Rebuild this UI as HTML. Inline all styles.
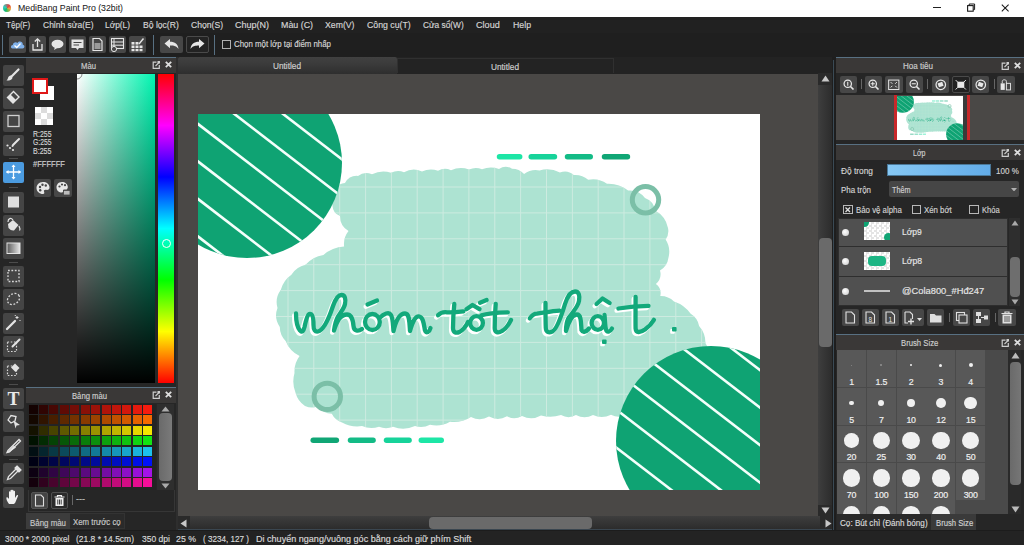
<!DOCTYPE html>
<html><head><meta charset="utf-8"><style>
*{margin:0;padding:0;box-sizing:border-box}
html,body{width:1024px;height:545px;overflow:hidden;background:#1c1c1c;font-family:"Liberation Sans",sans-serif;position:relative}
.a{position:absolute}
.t{position:absolute;white-space:nowrap;color:#d6d6d6;font-size:9.5px;line-height:11px;letter-spacing:-0.3px;-webkit-text-stroke:0.18px currentColor}
.tb{position:absolute;width:17px;height:17px;background:#474747;border-radius:2px}
.ph{position:absolute;height:16px;background:#3a3837;border-top:1px solid #587082}
.ph span{position:absolute;top:2px;white-space:nowrap;color:#cdcdcd;font-size:9.5px;line-height:11px;letter-spacing:-0.2px}
.tl{position:absolute;left:3px;width:20.5px;height:20.5px;background:#454545;border-radius:2px}
.sp{position:absolute;left:9px;width:9px;height:1px;background:#4c4c4c}
svg{position:absolute;overflow:hidden}
</style></head><body>
<div class="a" style="left:0;top:0;width:1024px;height:17px;background:#fff"></div>
<div class="a" style="left:3px;top:4px;width:8px;height:8px;border-radius:50%;background:conic-gradient(from 200deg,#10b070,#30d0c0 90deg,#e04040 200deg,#f0a040 260deg,#20c060 360deg)"></div>
<div class="t" style="left:17.5px;top:2.5px;font-size:9.3px;color:#1a1a1a;letter-spacing:0;transform:scaleX(0.9406);transform-origin:0 0;-webkit-text-stroke:0.05px #1a1a1a">MediBang Paint Pro (32bit)</div>
<div class="a" style="left:933.2px;top:7px;width:7.6px;height:1.2px;background:#222"></div>
<svg style="left:966px;top:3px" width="10" height="9" viewBox="0 0 10 9"><rect x="1.6" y="2.6" width="5.6" height="5.6" fill="none" stroke="#1a1a1a" stroke-width="1.1"/><path d="M3.2,2.4 V1 H8.6 V6.6 H7.4" fill="none" stroke="#1a1a1a" stroke-width="1"/></svg>
<svg style="left:1001px;top:3.5px" width="8.5" height="8" viewBox="0 0 8.5 8"><path d="M0.8,0.6 L7.6,7.4 M7.6,0.6 L0.8,7.4" stroke="#1a1a1a" stroke-width="1.05"/></svg>
<div class="a" style="left:0;top:17px;width:1024px;height:16px;background:#212121"></div>
<div class="a" style="left:0;top:33px;width:1024px;height:1px;background:#333"></div>
<div class="t" style="left:6.2px;top:19.0px;font-size:9.6px;color:#d4d4d4;letter-spacing:0;transform:scaleX(0.8426);transform-origin:0 0;">Tệp(F)</div>
<div class="t" style="left:42.5px;top:19.0px;font-size:9.6px;color:#d4d4d4;letter-spacing:0;transform:scaleX(0.8848);transform-origin:0 0;">Chỉnh sửa(E)</div>
<div class="t" style="left:105.0px;top:19.0px;font-size:9.6px;color:#d4d4d4;letter-spacing:0;transform:scaleX(0.8710);transform-origin:0 0;">Lớp(L)</div>
<div class="t" style="left:142.5px;top:19.0px;font-size:9.6px;color:#d4d4d4;letter-spacing:0;transform:scaleX(0.8941);transform-origin:0 0;">Bộ lọc(R)</div>
<div class="t" style="left:190.5px;top:19.0px;font-size:9.6px;color:#d4d4d4;letter-spacing:0;transform:scaleX(0.8955);transform-origin:0 0;">Chọn(S)</div>
<div class="t" style="left:235.0px;top:19.0px;font-size:9.6px;color:#d4d4d4;letter-spacing:0;transform:scaleX(0.9375);transform-origin:0 0;">Chụp(N)</div>
<div class="t" style="left:281.0px;top:19.0px;font-size:9.6px;color:#d4d4d4;letter-spacing:0;transform:scaleX(0.9234);transform-origin:0 0;">Màu (C)</div>
<div class="t" style="left:324.8px;top:19.0px;font-size:9.6px;color:#d4d4d4;letter-spacing:0;transform:scaleX(0.9073);transform-origin:0 0;">Xem(V)</div>
<div class="t" style="left:366.8px;top:19.0px;font-size:9.6px;color:#d4d4d4;letter-spacing:0;transform:scaleX(0.9118);transform-origin:0 0;">Công cụ(T)</div>
<div class="t" style="left:422.8px;top:19.0px;font-size:9.6px;color:#d4d4d4;letter-spacing:0;transform:scaleX(0.8682);transform-origin:0 0;">Cửa sổ(W)</div>
<div class="t" style="left:476.0px;top:19.0px;font-size:9.6px;color:#d4d4d4;letter-spacing:0;transform:scaleX(0.9470);transform-origin:0 0;">Cloud</div>
<div class="t" style="left:513.0px;top:19.0px;font-size:9.6px;color:#d4d4d4;letter-spacing:0;transform:scaleX(0.9121);transform-origin:0 0;">Help</div>
<div class="a" style="left:0;top:33px;width:1024px;height:24px;background:#1f1f1f"></div>
<div class="a" style="left:2px;top:35px;width:1px;height:20px;background:#587082"></div>
<div class="tb" style="left:9px;top:36px"></div>
<div class="tb" style="left:29px;top:36px"></div>
<div class="tb" style="left:49px;top:36px"></div>
<div class="tb" style="left:69px;top:36px"></div>
<div class="tb" style="left:89px;top:36px"></div>
<div class="tb" style="left:109px;top:36px"></div>
<div class="tb" style="left:129px;top:36px"></div>
<svg style="left:9px;top:36px" width="17" height="17" viewBox="0 0 17 17"><path d="M3.5,12.5 C1.5,12.5 1.5,9 3.8,9 C4,6.5 7,5.5 8.5,7 C10,4.5 14,5.5 13.8,8.8 C16,9 16,12.5 13.5,12.5 Z" fill="#7fb0e8"/><path d="M5.5,9.5 L7.8,11.5 L11.5,7.5" stroke="#fff" stroke-width="1.3" fill="none"/></svg>
<svg style="left:29px;top:36px" width="17" height="17" viewBox="0 0 17 17"><path d="M4,8 L4,14 L13,14 L13,8" stroke="#e6e6e6" stroke-width="1.3" fill="none"/><path d="M8.5,11 L8.5,3 M5.8,5.5 L8.5,2.8 L11.2,5.5" stroke="#e6e6e6" stroke-width="1.3" fill="none"/></svg>
<svg style="left:49px;top:36px" width="17" height="17" viewBox="0 0 17 17"><ellipse cx="8.5" cy="8" rx="6" ry="4.2" fill="#e6e6e6"/><path d="M6,11 L5,14 L9,11.5 Z" fill="#e6e6e6"/></svg>
<svg style="left:69px;top:36px" width="17" height="17" viewBox="0 0 17 17"><path d="M2.5,3.5 H14.5 V12 H10 L8.5,14 L7,12 H2.5 Z" fill="#e6e6e6"/><path d="M4.5,6.5 H12.5 M4.5,9 H10" stroke="#474747" stroke-width="1.2"/></svg>
<svg style="left:89px;top:36px" width="17" height="17" viewBox="0 0 17 17"><path d="M4,2.5 H10.5 L13,5 V14.5 H4 Z" fill="none" stroke="#e6e6e6" stroke-width="1.2"/><rect x="5.5" y="7" width="6" height="6" fill="#9a9a9a"/></svg>
<svg style="left:109px;top:36px" width="17" height="17" viewBox="0 0 17 17"><rect x="2.5" y="2.5" width="12" height="10" fill="none" stroke="#e6e6e6" stroke-width="1.1"/><path d="M2.5,6 H14.5 M2.5,9.2 H14.5 M5,2.5 V12.5" stroke="#e6e6e6" stroke-width="1"/><circle cx="5" cy="13" r="2.6" fill="#474747" stroke="#e6e6e6" stroke-width="1"/></svg>
<svg style="left:129px;top:36px" width="17" height="17" viewBox="0 0 17 17"><g fill="#e6e6e6"><rect x="2.5" y="6" width="3" height="2.6"/><rect x="6.5" y="6" width="3" height="2.6"/><rect x="2.5" y="9.5" width="3" height="2.6"/><rect x="6.5" y="9.5" width="3" height="2.6"/><rect x="10.5" y="9.5" width="3" height="2.6"/><rect x="2.5" y="13" width="3" height="2.2"/><rect x="6.5" y="13" width="3" height="2.2"/><rect x="10.5" y="13" width="3" height="2.2"/></g><path d="M10,8 L14.5,2.5" stroke="#e6e6e6" stroke-width="1.4"/></svg>
<div class="a" style="left:153px;top:35px;width:1px;height:20px;background:#587082"></div>
<div class="a" style="left:160px;top:36px;width:23px;height:17px;background:#474747;border-radius:2px"></div>
<svg style="left:160px;top:36px" width="23" height="17" viewBox="0 0 23 17"><path d="M4.5,7.5 L10,3 V5.8 C15,5.8 18,8 18.5,13 C16.5,10 14,9.5 10,9.5 V12.3 Z" fill="#e6e6e6"/></svg>
<div class="a" style="left:186px;top:36px;width:23px;height:17px;background:#232323;border:1px solid #4a4a4a;border-radius:2px"></div>
<svg style="left:186px;top:36px" width="23" height="17" viewBox="0 0 23 17"><path d="M18.5,7.5 L13,3 V5.8 C8,5.8 5,8 4.5,13 C6.5,10 9,9.5 13,9.5 V12.3 Z" fill="#e6e6e6"/></svg>
<div class="a" style="left:214px;top:35px;width:1px;height:20px;background:#587082"></div>
<div class="a" style="left:222px;top:39.8px;width:8.8px;height:8.8px;border:1px solid #b0b0b0"></div>
<div class="t" style="left:234.0px;top:38.4px;font-size:9.6px;color:#d4d4d4;letter-spacing:0;transform:scaleX(0.8200);transform-origin:0 0;">Chọn một lớp tại điểm nhấp</div>
<div class="a" style="left:0;top:57px;width:26px;height:473px;background:#262626"></div>
<div class="a" style="left:0;top:57px;width:26px;height:1px;background:#587082"></div>
<div class="sp" style="top:158.0px"></div>
<div class="sp" style="top:186.5px"></div>
<div class="sp" style="top:262.0px"></div>
<div class="sp" style="top:384.0px"></div>
<div class="sp" style="top:459.0px"></div>
<div class="tl" style="top:65.0px;background:#454545"></div>
<svg style="left:3px;top:65.0px" width="21" height="20" viewBox="0 0 21 20"><path d="M15.5,4.5 L8.5,11.5" stroke="#e4e4e4" stroke-width="2.2" stroke-linecap="round"/><path d="M8.8,11 C7.5,10 5.5,11 5,13 C4.8,14 4,15 3.5,15.5 C6,15.8 8.5,15 9.5,13 Z" fill="#e4e4e4"/></svg>
<div class="tl" style="top:88.0px;background:#454545"></div>
<svg style="left:3px;top:88.0px" width="21" height="20" viewBox="0 0 21 20"><path d="M10.5,3.5 L16,9 L10,15 L4.5,9.5 Z" fill="none" stroke="#e4e4e4" stroke-width="1.4"/><path d="M4.5,9.5 L7.5,6.5 L13,12 L10,15 Z" fill="#e4e4e4"/></svg>
<div class="tl" style="top:111.0px;background:#454545"></div>
<svg style="left:3px;top:111.0px" width="21" height="20" viewBox="0 0 21 20"><rect x="5" y="4.5" width="11" height="11" fill="none" stroke="#d0d0d0" stroke-width="1.3"/></svg>
<div class="tl" style="top:135.0px;background:#454545"></div>
<svg style="left:3px;top:135.0px" width="21" height="20" viewBox="0 0 21 20"><path d="M16,4 L10,10" stroke="#e4e4e4" stroke-width="2" stroke-linecap="round"/><g fill="#e4e4e4"><circle cx="4.5" cy="10.5" r="1.1"/><circle cx="7" cy="13" r="1.1"/><circle cx="10" cy="15" r="1.1"/><circle cx="9.5" cy="11" r="1"/></g></svg>
<div class="tl" style="top:162.0px;background:#4b9be0"></div>
<svg style="left:3px;top:162.0px" width="21" height="20" viewBox="0 0 21 20"><path d="M10.5,3 V17 M3.5,10 H17.5" stroke="#fff" stroke-width="1.3"/><path d="M10.5,2.5 L8.5,5 H12.5 Z M10.5,17.5 L8.5,15 H12.5 Z M3,10 L5.5,8 V12 Z M18,10 L15.5,8 V12 Z" fill="#fff"/></svg>
<div class="tl" style="top:192.0px;background:#454545"></div>
<svg style="left:3px;top:192.0px" width="21" height="20" viewBox="0 0 21 20"><rect x="5" y="4.5" width="11" height="11" fill="#dedede"/></svg>
<div class="tl" style="top:215.0px;background:#454545"></div>
<svg style="left:3px;top:215.0px" width="21" height="20" viewBox="0 0 21 20"><path d="M5,9 L10,5 L15.5,10 L11,15.5 Q8,16 5.5,13 Z" fill="#e4e4e4"/><path d="M10,5 C8,2.5 5,3 5,7" stroke="#e4e4e4" stroke-width="1.2" fill="none"/><path d="M16,11 Q17.5,14 16.5,15.5" stroke="#e4e4e4" stroke-width="1.3" fill="none"/></svg>
<div class="tl" style="top:238.0px;background:#454545"></div>
<svg style="left:3px;top:238.0px" width="21" height="20" viewBox="0 0 21 20"><defs><linearGradient id="gg" x1="0" x2="1"><stop offset="0" stop-color="#5a5a5a"/><stop offset="1" stop-color="#e8e8e8"/></linearGradient></defs><rect x="4" y="5" width="13" height="10.5" fill="url(#gg)" stroke="#e4e4e4" stroke-width="1"/></svg>
<div class="tl" style="top:266.0px;background:#454545"></div>
<svg style="left:3px;top:266.0px" width="21" height="20" viewBox="0 0 21 20"><rect x="5" y="4.5" width="11" height="11" fill="none" stroke="#d8d8d8" stroke-width="1.3" stroke-dasharray="1.8,1.6"/></svg>
<div class="tl" style="top:289.0px;background:#454545"></div>
<svg style="left:3px;top:289.0px" width="21" height="20" viewBox="0 0 21 20"><ellipse cx="10.5" cy="10" rx="6.5" ry="5" transform="rotate(-35 10.5 10)" fill="none" stroke="#d8d8d8" stroke-width="1.3" stroke-dasharray="1.8,1.6"/></svg>
<div class="tl" style="top:313.0px;background:#454545"></div>
<svg style="left:3px;top:313.0px" width="21" height="20" viewBox="0 0 21 20"><path d="M4,16 L12,8" stroke="#e4e4e4" stroke-width="2.3" stroke-linecap="round"/><path d="M14,3 V6 M12.5,4.5 H15.5 M16.5,7 L17.5,8 M12,2 L12.5,3" stroke="#e4e4e4" stroke-width="1"/></svg>
<div class="tl" style="top:336.0px;background:#454545"></div>
<svg style="left:3px;top:336.0px" width="21" height="20" viewBox="0 0 21 20"><rect x="4.5" y="6" width="9" height="9.5" fill="none" stroke="#d8d8d8" stroke-width="1.2" stroke-dasharray="1.6,1.6"/><path d="M16.5,3.5 L9.5,10.5" stroke="#e4e4e4" stroke-width="2" stroke-linecap="round"/></svg>
<div class="tl" style="top:359.5px;background:#454545"></div>
<svg style="left:3px;top:359.5px" width="21" height="20" viewBox="0 0 21 20"><rect x="4.5" y="6" width="9" height="9.5" fill="none" stroke="#d8d8d8" stroke-width="1.2" stroke-dasharray="1.6,1.6"/><path d="M12,3.5 L16.5,8 L12.5,12 L8,7.5 Z" fill="#e4e4e4"/></svg>
<div class="tl" style="top:388.0px;background:#454545"></div>
<svg style="left:3px;top:388.0px" width="21" height="20" viewBox="0 0 21 20"><text x="10.5" y="17" text-anchor="middle" font-family="Liberation Serif" font-size="18" font-weight="bold" fill="#eaeaea">T</text></svg>
<div class="tl" style="top:411.0px;background:#454545"></div>
<svg style="left:3px;top:411.0px" width="21" height="20" viewBox="0 0 21 20"><path d="M5,9 L8,4.5 L13,5.5 L12,10 L8,12 Z" fill="none" stroke="#e4e4e4" stroke-width="1.3"/><path d="M10.5,9.5 L17,14 L13.5,14.5 L12.5,17.5 Z" fill="#e4e4e4"/></svg>
<div class="tl" style="top:435.5px;background:#454545"></div>
<svg style="left:3px;top:435.5px" width="21" height="20" viewBox="0 0 21 20"><path d="M16,3.5 L5,14.5 L4,16.5 L6.5,16 L17.5,5 Z" fill="none" stroke="#e4e4e4" stroke-width="1.3"/><path d="M4,16.5 L11,9.5 L13,11.5 L6.5,16 Z" fill="#e4e4e4"/></svg>
<div class="tl" style="top:463.0px;background:#454545"></div>
<svg style="left:3px;top:463.0px" width="21" height="20" viewBox="0 0 21 20"><path d="M13,6 L5.5,13.5 L4.5,16.5 L7.5,15.5 L15,8" fill="none" stroke="#e4e4e4" stroke-width="1.3"/><path d="M12,5 L16,9 M14,3 L18,7 L16,9 L12,5 Z" fill="#e4e4e4" stroke="#e4e4e4" stroke-width="1.2"/></svg>
<div class="tl" style="top:487.0px;background:#454545"></div>
<svg style="left:3px;top:487.0px" width="21" height="20" viewBox="0 0 21 20"><path d="M6,17 C4,14 3,12 3.5,10.5 C4,10 5,10.5 6,12 V5 C6,4 7.5,4 7.5,5 V10 V3.5 C7.5,2.5 9,2.5 9,3.5 V10 V3.5 C9,2.5 10.5,2.5 10.5,3.5 V10 V4.5 C10.5,3.5 12,3.5 12,4.5 V11 L13.5,8.5 C14.5,7.5 15.5,8 15,9 L12.5,15 C12,16.5 11,17 10,17 Z" fill="#f0f0f0"/></svg>
<div class="a" style="left:26px;top:57px;width:150px;height:330px;background:#262626"></div>
<div class="ph" style="left:26px;top:57px;width:150px"></div>
<div class="t" style="left:81.0px;top:59.5px;font-size:9.6px;color:#cdcdcd;letter-spacing:0;transform:scaleX(0.8033);transform-origin:0 0;">Màu</div>
<svg style="left:152.0px;top:60.8px" width="8.5" height="8.5" viewBox="0 0 8.5 8.5"><path d="M4.5,1.2 H1.2 V7.3 H7.3 V4" stroke="#cfcfcf" stroke-width="1.2" fill="none"/><path d="M3.5,5 L7.2,1.3" stroke="#cfcfcf" stroke-width="1.1"/><rect x="5.5" y="0" width="2.5" height="2.5" fill="#cfcfcf"/></svg>
<svg style="left:164.6px;top:61.0px" width="7" height="7" viewBox="0 0 7 7"><path d="M0.8,0.8 L6.2,6.2 M6.2,0.8 L0.8,6.2" stroke="#dedede" stroke-width="1.8"/></svg>
<div class="a" style="left:32px;top:78px;width:16px;height:16px;background:#fff;border:2px solid #e01818;z-index:2"></div>
<div class="a" style="left:39px;top:85px;width:16px;height:16px;background:#fff;border:1px solid #262626"></div>
<div class="a" style="left:34.5px;top:106.5px;width:18px;height:18px;background:conic-gradient(#dcdcdc 25%,#fff 0 50%,#dcdcdc 0 75%,#fff 0);background-size:12px 12px"></div>
<div class="t" style="left:32.5px;top:128.5px;font-size:9.0px;color:#d0d0d0;letter-spacing:0;transform:scaleX(0.7698);transform-origin:0 0;">R:255</div>
<div class="t" style="left:32.5px;top:137.2px;font-size:9.0px;color:#d0d0d0;letter-spacing:0;transform:scaleX(0.7541);transform-origin:0 0;">G:255</div>
<div class="t" style="left:32.5px;top:145.5px;font-size:9.0px;color:#d0d0d0;letter-spacing:0;transform:scaleX(0.7862);transform-origin:0 0;">B:255</div>
<div class="t" style="left:32.5px;top:158.0px;font-size:9.5px;color:#d0d0d0;letter-spacing:0;transform:scaleX(0.7978);transform-origin:0 0;">#FFFFFF</div>
<div class="tb" style="left:33.5px;top:179px;width:17.5px;height:17.5px"></div>
<div class="tb" style="left:54.0px;top:179px;width:17.5px;height:17.5px"></div>
<svg style="left:33.5px;top:179px" width="18" height="18" viewBox="0 0 18 18"><path d="M9,3 C4.5,3 2.5,6.5 2.5,9 C2.5,12.5 5.5,15 9,15 C10.5,15 10.5,13.5 10,12.5 C9.5,11.5 10.5,10.5 12,10.8 C14.5,11.2 15.5,10 15.5,8.5 C15.5,5 12.5,3 9,3 Z" fill="#e8e8e8"/><g fill="#474747"><circle cx="6" cy="8" r="1.2"/><circle cx="8.5" cy="5.8" r="1.2"/><circle cx="11.8" cy="6.5" r="1.2"/><circle cx="6.2" cy="11.2" r="1.2"/></g></svg>
<svg style="left:54px;top:179px" width="18" height="18" viewBox="0 0 18 18"><path d="M8,3 C4,3 2.5,6 2.5,8.5 C2.5,11.5 5,13.5 8,13.5 C9,13.5 9.2,12.5 9,11.8 C8.8,11 9.5,10.2 11,10.5 C13,10.8 13.8,9.8 13.8,8 C13.8,5 11,3 8,3 Z" fill="#e8e8e8"/><g fill="#474747"><circle cx="5.5" cy="7.5" r="1.1"/><circle cx="8" cy="5.5" r="1.1"/><circle cx="11" cy="6.2" r="1.1"/></g><rect x="9.5" y="11.5" width="6.5" height="4.5" fill="#bbb" stroke="#474747" stroke-width="0.8"/></svg>
<div class="a" style="left:77px;top:74px;width:78px;height:309px;background:linear-gradient(to bottom,rgba(0,0,0,0),#000),linear-gradient(to right,#fff,#00f5b0)"></div>
<svg style="left:77px;top:74px" width="10" height="10" viewBox="0 0 10 10"><path d="M0,5 A5,5 0 0 0 5,0" stroke="#888" stroke-width="1" fill="none"/></svg>
<div class="a" style="left:158px;top:74px;width:16px;height:309px;background:linear-gradient(to bottom,#f00,#f0f 16.67%,#00f 33.33%,#0ff 50%,#0f0 66.67%,#ff0 83.33%,#f00)"></div>
<div class="a" style="left:161.5px;top:238.5px;width:9px;height:9px;border:1.3px solid #fff;border-radius:50%"></div>
<div class="ph" style="left:26px;top:387px;width:150px"></div>
<div class="t" style="left:71.6px;top:389.5px;font-size:9.6px;color:#cdcdcd;letter-spacing:0;transform:scaleX(0.8003);transform-origin:0 0;">Bảng màu</div>
<svg style="left:152.0px;top:390.8px" width="8.5" height="8.5" viewBox="0 0 8.5 8.5"><path d="M4.5,1.2 H1.2 V7.3 H7.3 V4" stroke="#cfcfcf" stroke-width="1.2" fill="none"/><path d="M3.5,5 L7.2,1.3" stroke="#cfcfcf" stroke-width="1.1"/><rect x="5.5" y="0" width="2.5" height="2.5" fill="#cfcfcf"/></svg>
<svg style="left:164.6px;top:391.0px" width="7" height="7" viewBox="0 0 7 7"><path d="M0.8,0.8 L6.2,6.2 M6.2,0.8 L0.8,6.2" stroke="#dedede" stroke-width="1.8"/></svg>
<div class="a" style="left:26px;top:403px;width:150px;height:127px;background:#262626"></div>
<div class="a" style="left:27px;top:404px;width:129px;height:86px;background:#242424"></div>
<div class="a" style="left:28.6px;top:405.0px;width:9px;height:9px;background:rgb(20,2,1)"></div><div class="a" style="left:39.0px;top:405.0px;width:9px;height:9px;background:rgb(48,5,3)"></div><div class="a" style="left:49.4px;top:405.0px;width:9px;height:9px;background:rgb(72,8,4)"></div><div class="a" style="left:59.9px;top:405.0px;width:9px;height:9px;background:rgb(95,11,5)"></div><div class="a" style="left:70.3px;top:405.0px;width:9px;height:9px;background:rgb(116,13,7)"></div><div class="a" style="left:80.7px;top:405.0px;width:9px;height:9px;background:rgb(136,16,8)"></div><div class="a" style="left:91.1px;top:405.0px;width:9px;height:9px;background:rgb(156,18,9)"></div><div class="a" style="left:101.5px;top:405.0px;width:9px;height:9px;background:rgb(175,20,10)"></div><div class="a" style="left:112.0px;top:405.0px;width:9px;height:9px;background:rgb(193,22,12)"></div><div class="a" style="left:122.4px;top:405.0px;width:9px;height:9px;background:rgb(211,24,13)"></div><div class="a" style="left:132.8px;top:405.0px;width:9px;height:9px;background:rgb(229,26,14)"></div><div class="a" style="left:143.2px;top:405.0px;width:9px;height:9px;background:rgb(246,28,15)"></div><div class="a" style="left:28.6px;top:415.4px;width:9px;height:9px;background:rgb(20,8,0)"></div><div class="a" style="left:39.0px;top:415.4px;width:9px;height:9px;background:rgb(48,20,0)"></div><div class="a" style="left:49.4px;top:415.4px;width:9px;height:9px;background:rgb(72,31,0)"></div><div class="a" style="left:59.9px;top:415.4px;width:9px;height:9px;background:rgb(95,41,0)"></div><div class="a" style="left:70.3px;top:415.4px;width:9px;height:9px;background:rgb(116,50,0)"></div><div class="a" style="left:80.7px;top:415.4px;width:9px;height:9px;background:rgb(136,58,0)"></div><div class="a" style="left:91.1px;top:415.4px;width:9px;height:9px;background:rgb(156,67,0)"></div><div class="a" style="left:101.5px;top:415.4px;width:9px;height:9px;background:rgb(175,75,0)"></div><div class="a" style="left:112.0px;top:415.4px;width:9px;height:9px;background:rgb(193,83,0)"></div><div class="a" style="left:122.4px;top:415.4px;width:9px;height:9px;background:rgb(211,91,0)"></div><div class="a" style="left:132.8px;top:415.4px;width:9px;height:9px;background:rgb(229,98,0)"></div><div class="a" style="left:143.2px;top:415.4px;width:9px;height:9px;background:rgb(246,106,0)"></div><div class="a" style="left:28.6px;top:425.8px;width:9px;height:9px;background:rgb(20,18,0)"></div><div class="a" style="left:39.0px;top:425.8px;width:9px;height:9px;background:rgb(48,45,0)"></div><div class="a" style="left:49.4px;top:425.8px;width:9px;height:9px;background:rgb(72,68,0)"></div><div class="a" style="left:59.9px;top:425.8px;width:9px;height:9px;background:rgb(95,89,0)"></div><div class="a" style="left:70.3px;top:425.8px;width:9px;height:9px;background:rgb(116,109,0)"></div><div class="a" style="left:80.7px;top:425.8px;width:9px;height:9px;background:rgb(136,128,0)"></div><div class="a" style="left:91.1px;top:425.8px;width:9px;height:9px;background:rgb(156,146,0)"></div><div class="a" style="left:101.5px;top:425.8px;width:9px;height:9px;background:rgb(175,164,0)"></div><div class="a" style="left:112.0px;top:425.8px;width:9px;height:9px;background:rgb(193,182,0)"></div><div class="a" style="left:122.4px;top:425.8px;width:9px;height:9px;background:rgb(211,199,0)"></div><div class="a" style="left:132.8px;top:425.8px;width:9px;height:9px;background:rgb(229,215,0)"></div><div class="a" style="left:143.2px;top:425.8px;width:9px;height:9px;background:rgb(246,231,0)"></div><div class="a" style="left:28.6px;top:436.3px;width:9px;height:9px;background:rgb(1,18,1)"></div><div class="a" style="left:39.0px;top:436.3px;width:9px;height:9px;background:rgb(3,44,3)"></div><div class="a" style="left:49.4px;top:436.3px;width:9px;height:9px;background:rgb(5,67,5)"></div><div class="a" style="left:59.9px;top:436.3px;width:9px;height:9px;background:rgb(7,87,7)"></div><div class="a" style="left:70.3px;top:436.3px;width:9px;height:9px;background:rgb(9,107,9)"></div><div class="a" style="left:80.7px;top:436.3px;width:9px;height:9px;background:rgb(10,125,10)"></div><div class="a" style="left:91.1px;top:436.3px;width:9px;height:9px;background:rgb(12,143,12)"></div><div class="a" style="left:101.5px;top:436.3px;width:9px;height:9px;background:rgb(13,161,13)"></div><div class="a" style="left:112.0px;top:436.3px;width:9px;height:9px;background:rgb(15,178,15)"></div><div class="a" style="left:122.4px;top:436.3px;width:9px;height:9px;background:rgb(16,194,16)"></div><div class="a" style="left:132.8px;top:436.3px;width:9px;height:9px;background:rgb(17,211,17)"></div><div class="a" style="left:143.2px;top:436.3px;width:9px;height:9px;background:rgb(19,227,19)"></div><div class="a" style="left:28.6px;top:446.7px;width:9px;height:9px;background:rgb(2,15,19)"></div><div class="a" style="left:39.0px;top:446.7px;width:9px;height:9px;background:rgb(5,37,46)"></div><div class="a" style="left:49.4px;top:446.7px;width:9px;height:9px;background:rgb(8,57,69)"></div><div class="a" style="left:59.9px;top:446.7px;width:9px;height:9px;background:rgb(11,74,91)"></div><div class="a" style="left:70.3px;top:446.7px;width:9px;height:9px;background:rgb(13,91,111)"></div><div class="a" style="left:80.7px;top:446.7px;width:9px;height:9px;background:rgb(16,107,131)"></div><div class="a" style="left:91.1px;top:446.7px;width:9px;height:9px;background:rgb(18,122,150)"></div><div class="a" style="left:101.5px;top:446.7px;width:9px;height:9px;background:rgb(20,137,168)"></div><div class="a" style="left:112.0px;top:446.7px;width:9px;height:9px;background:rgb(22,151,185)"></div><div class="a" style="left:122.4px;top:446.7px;width:9px;height:9px;background:rgb(24,165,203)"></div><div class="a" style="left:132.8px;top:446.7px;width:9px;height:9px;background:rgb(26,179,220)"></div><div class="a" style="left:143.2px;top:446.7px;width:9px;height:9px;background:rgb(28,193,236)"></div><div class="a" style="left:28.6px;top:457.1px;width:9px;height:9px;background:rgb(0,1,20)"></div><div class="a" style="left:39.0px;top:457.1px;width:9px;height:9px;background:rgb(0,3,48)"></div><div class="a" style="left:49.4px;top:457.1px;width:9px;height:9px;background:rgb(0,5,72)"></div><div class="a" style="left:59.9px;top:457.1px;width:9px;height:9px;background:rgb(0,7,95)"></div><div class="a" style="left:70.3px;top:457.1px;width:9px;height:9px;background:rgb(0,9,116)"></div><div class="a" style="left:80.7px;top:457.1px;width:9px;height:9px;background:rgb(0,10,136)"></div><div class="a" style="left:91.1px;top:457.1px;width:9px;height:9px;background:rgb(0,12,156)"></div><div class="a" style="left:101.5px;top:457.1px;width:9px;height:9px;background:rgb(0,13,175)"></div><div class="a" style="left:112.0px;top:457.1px;width:9px;height:9px;background:rgb(0,15,193)"></div><div class="a" style="left:122.4px;top:457.1px;width:9px;height:9px;background:rgb(0,16,211)"></div><div class="a" style="left:132.8px;top:457.1px;width:9px;height:9px;background:rgb(0,17,229)"></div><div class="a" style="left:143.2px;top:457.1px;width:9px;height:9px;background:rgb(0,19,246)"></div><div class="a" style="left:28.6px;top:467.5px;width:9px;height:9px;background:rgb(13,1,18)"></div><div class="a" style="left:39.0px;top:467.5px;width:9px;height:9px;background:rgb(32,3,45)"></div><div class="a" style="left:49.4px;top:467.5px;width:9px;height:9px;background:rgb(48,5,68)"></div><div class="a" style="left:59.9px;top:467.5px;width:9px;height:9px;background:rgb(63,7,89)"></div><div class="a" style="left:70.3px;top:467.5px;width:9px;height:9px;background:rgb(77,9,109)"></div><div class="a" style="left:80.7px;top:467.5px;width:9px;height:9px;background:rgb(91,10,128)"></div><div class="a" style="left:91.1px;top:467.5px;width:9px;height:9px;background:rgb(104,12,146)"></div><div class="a" style="left:101.5px;top:467.5px;width:9px;height:9px;background:rgb(116,13,164)"></div><div class="a" style="left:112.0px;top:467.5px;width:9px;height:9px;background:rgb(129,15,182)"></div><div class="a" style="left:122.4px;top:467.5px;width:9px;height:9px;background:rgb(141,16,199)"></div><div class="a" style="left:132.8px;top:467.5px;width:9px;height:9px;background:rgb(152,17,215)"></div><div class="a" style="left:143.2px;top:467.5px;width:9px;height:9px;background:rgb(164,19,231)"></div><div class="a" style="left:28.6px;top:477.9px;width:9px;height:9px;background:rgb(20,1,12)"></div><div class="a" style="left:39.0px;top:477.9px;width:9px;height:9px;background:rgb(48,2,30)"></div><div class="a" style="left:49.4px;top:477.9px;width:9px;height:9px;background:rgb(72,4,45)"></div><div class="a" style="left:59.9px;top:477.9px;width:9px;height:9px;background:rgb(95,5,59)"></div><div class="a" style="left:70.3px;top:477.9px;width:9px;height:9px;background:rgb(116,6,73)"></div><div class="a" style="left:80.7px;top:477.9px;width:9px;height:9px;background:rgb(136,8,85)"></div><div class="a" style="left:91.1px;top:477.9px;width:9px;height:9px;background:rgb(156,9,97)"></div><div class="a" style="left:101.5px;top:477.9px;width:9px;height:9px;background:rgb(175,10,109)"></div><div class="a" style="left:112.0px;top:477.9px;width:9px;height:9px;background:rgb(193,11,121)"></div><div class="a" style="left:122.4px;top:477.9px;width:9px;height:9px;background:rgb(211,12,132)"></div><div class="a" style="left:132.8px;top:477.9px;width:9px;height:9px;background:rgb(229,13,143)"></div><div class="a" style="left:143.2px;top:477.9px;width:9px;height:9px;background:rgb(246,14,154)"></div>
<div class="a" style="left:157px;top:404px;width:17px;height:86px;background:#2e2e2e"></div>
<div class="a" style="left:159px;top:413px;width:13px;height:68px;background:linear-gradient(to right,#6a6a6a,#7a7a7a);border-radius:4px"></div>
<svg style="left:161px;top:406px" width="9" height="6" viewBox="0 0 9 6"><path d="M4.5,0.5 L8.5,5.5 H0.5 Z" fill="#aaa"/></svg>
<svg style="left:161px;top:483px" width="9" height="6" viewBox="0 0 9 6"><path d="M4.5,5.5 L8.5,0.5 H0.5 Z" fill="#aaa"/></svg>
<div class="a" style="left:28px;top:490px;width:147px;height:22px;border:1px solid #363636;border-top:none"></div>
<div class="a" style="left:31px;top:492px;width:17px;height:17px;background:#444;border:1px solid #555;border-radius:2px"></div>
<svg style="left:31px;top:492px" width="17" height="17" viewBox="0 0 17 17"><path d="M4.5,3 H10 L12.5,5.5 V14 H4.5 Z" fill="none" stroke="#e0e0e0" stroke-width="1.1"/></svg>
<div class="a" style="left:51px;top:492px;width:17px;height:17px;background:#2a2a2a;border:1px solid #505050;border-radius:2px"></div>
<svg style="left:51px;top:492px" width="17" height="17" viewBox="0 0 17 17"><path d="M3.5,5 H13.5 M6.5,5 V3.5 H10.5 V5" stroke="#f0f0f0" stroke-width="1.2" fill="none"/><path d="M4.5,6 H12.5 V14 H4.5 Z" fill="#f0f0f0"/><path d="M6.8,7.5 V12.5 M8.5,7.5 V12.5 M10.2,7.5 V12.5" stroke="#2a2a2a" stroke-width="0.9"/></svg>
<div class="a" style="left:72px;top:495px;width:1px;height:10px;background:#666"></div>
<div class="t" style="left:76.0px;top:494.0px;font-size:9.0px;color:#bbb;letter-spacing:0.000px;">---</div>
<div class="a" style="left:26px;top:513px;width:44px;height:16px;background:#3c3c3c"></div>
<div class="t" style="left:29.6px;top:516.5px;font-size:9.4px;color:#c8c8c8;letter-spacing:0;transform:scaleX(0.8421);transform-origin:0 0;">Bảng màu</div>
<div class="a" style="left:70px;top:513px;width:55px;height:16px;background:#2a2a2a;border:1px solid #333;border-left:none"></div>
<div class="t" style="left:72.9px;top:515.5px;font-size:9.4px;color:#c8c8c8;letter-spacing:0;transform:scaleX(0.8334);transform-origin:0 0;">Xem trước cọ</div>
<div class="a" style="left:176px;top:57px;width:660px;height:473px;background:#232323"></div>
<div class="a" style="left:176px;top:57px;width:2px;height:473px;background:#2e2e2e"></div>
<div class="a" style="left:178px;top:56.5px;width:219px;height:17.5px;background:linear-gradient(#414141 0,#3b3b3b 40%,#2e2e2e);border-radius:2px 2px 0 0"></div>
<div class="t" style="left:273.0px;top:59.5px;font-size:9.6px;color:#cfcfcf;letter-spacing:0;transform:scaleX(0.8607);transform-origin:0 0;">Untitled</div>
<div class="a" style="left:397px;top:58px;width:217px;height:15px;background:#232323;border:1px solid #303030;border-bottom:none"></div>
<div class="t" style="left:491.0px;top:60.5px;font-size:9.6px;color:#cfcfcf;letter-spacing:0;transform:scaleX(0.8607);transform-origin:0 0;">Untitled</div>
<div class="a" style="left:178px;top:74px;width:640px;height:442px;background:#4a4846"></div>
<svg class="a" style="left:198px;top:114px" width="562" height="376" viewBox="198 114 562 376"><defs>
<clipPath id="cl1"><circle cx="247" cy="163" r="95"/></clipPath>
<clipPath id="cl2"><circle cx="711" cy="441" r="95"/></clipPath>
<clipPath id="mc"><path d="M345.0,183.0 Q349.2,175.2 358.0,175.9 Q364.5,170.8 372.0,174.3 Q381.2,169.8 391.0,172.8 Q397.4,169.3 404.0,172.2 Q412.8,167.3 422.0,171.4 Q429.9,167.9 438.0,170.7 Q444.4,167.1 451.0,170.2 Q459.9,166.4 469.0,169.5 Q475.4,166.6 482.0,169.2 Q490.5,165.8 499.0,168.9 Q505.4,164.9 512.0,168.7 Q519.2,168.8 524.1,174.0 Q531.0,168.7 539.6,170.4 Q550.1,167.5 559.9,172.5 Q567.6,169.4 573.8,175.0 Q582.0,174.4 588.2,179.7 Q598.5,177.7 607.0,183.7 Q618.9,183.1 628.1,190.6 Q638.6,189.7 645.0,198.0 Q653.9,201.3 655.1,210.6 Q665.6,216.3 668.0,228.0 Q669.4,234.3 665.6,239.6 Q671.0,247.8 668.5,257.4 Q667.4,266.0 660.0,270.5 Q662.2,278.6 655.9,284.0 Q662.0,288.5 660.3,296.0 Q668.3,295.8 674.0,301.5 Q684.4,304.9 690.7,313.8 Q697.6,318.0 699.1,325.9 Q705.6,333.2 705.4,343.0 Q710.9,351.9 708.1,362.0 Q711.6,370.3 706.4,377.7 Q705.7,387.2 698.4,393.3 Q694.8,399.4 688.0,401.6 Q684.2,407.8 677.0,408.4 Q670.5,412.9 663.0,410.6 Q654.1,416.3 644.0,413.4 Q635.8,419.0 627.0,414.3 Q619.1,419.1 611.0,414.7 Q602.1,419.1 593.0,415.0 Q584.5,419.4 576.0,415.0 Q568.5,419.3 561.0,415.0 Q551.1,418.4 541.0,415.5 Q531.6,420.8 522.0,415.9 Q514.6,420.6 507.0,416.3 Q498.1,421.4 489.0,416.6 Q480.1,421.6 471.0,417.0 Q461.4,423.2 450.0,421.8 Q440.6,427.2 430.0,424.8 Q422.8,428.6 415.0,426.1 Q404.1,430.9 393.0,426.8 Q386.0,429.6 379.0,426.8 Q370.4,429.6 362.0,426.1 Q351.4,427.7 342.0,422.4 Q335.0,420.3 331.8,413.8 Q323.1,413.4 318.0,406.5 Q311.4,408.8 305.0,406.0 Q297.8,401.3 295.6,393.0 Q291.6,383.2 294.5,373.0 Q293.9,363.5 299.6,356.0 Q289.7,351.1 285.6,340.9 Q279.9,335.0 279.8,326.9 Q273.6,318.0 277.5,308.0 Q274.7,298.2 280.7,290.0 Q283.3,280.5 291.4,274.8 Q296.4,266.8 305.5,264.8 Q312.6,256.5 323.4,254.9 Q332.3,247.0 344.1,246.4 Q343.1,237.8 348.5,231.0 Q339.9,225.9 340.0,216.0 Q333.0,213.5 332.5,206.0 Q330.1,196.4 335.8,188.4 Q339.0,183.3 345.0,183.0 Z"/></clipPath>
</defs>
<rect x="198" y="114" width="562" height="376" fill="#fff"/>
<path d="M345.0,183.0 Q349.2,175.2 358.0,175.9 Q364.5,170.8 372.0,174.3 Q381.2,169.8 391.0,172.8 Q397.4,169.3 404.0,172.2 Q412.8,167.3 422.0,171.4 Q429.9,167.9 438.0,170.7 Q444.4,167.1 451.0,170.2 Q459.9,166.4 469.0,169.5 Q475.4,166.6 482.0,169.2 Q490.5,165.8 499.0,168.9 Q505.4,164.9 512.0,168.7 Q519.2,168.8 524.1,174.0 Q531.0,168.7 539.6,170.4 Q550.1,167.5 559.9,172.5 Q567.6,169.4 573.8,175.0 Q582.0,174.4 588.2,179.7 Q598.5,177.7 607.0,183.7 Q618.9,183.1 628.1,190.6 Q638.6,189.7 645.0,198.0 Q653.9,201.3 655.1,210.6 Q665.6,216.3 668.0,228.0 Q669.4,234.3 665.6,239.6 Q671.0,247.8 668.5,257.4 Q667.4,266.0 660.0,270.5 Q662.2,278.6 655.9,284.0 Q662.0,288.5 660.3,296.0 Q668.3,295.8 674.0,301.5 Q684.4,304.9 690.7,313.8 Q697.6,318.0 699.1,325.9 Q705.6,333.2 705.4,343.0 Q710.9,351.9 708.1,362.0 Q711.6,370.3 706.4,377.7 Q705.7,387.2 698.4,393.3 Q694.8,399.4 688.0,401.6 Q684.2,407.8 677.0,408.4 Q670.5,412.9 663.0,410.6 Q654.1,416.3 644.0,413.4 Q635.8,419.0 627.0,414.3 Q619.1,419.1 611.0,414.7 Q602.1,419.1 593.0,415.0 Q584.5,419.4 576.0,415.0 Q568.5,419.3 561.0,415.0 Q551.1,418.4 541.0,415.5 Q531.6,420.8 522.0,415.9 Q514.6,420.6 507.0,416.3 Q498.1,421.4 489.0,416.6 Q480.1,421.6 471.0,417.0 Q461.4,423.2 450.0,421.8 Q440.6,427.2 430.0,424.8 Q422.8,428.6 415.0,426.1 Q404.1,430.9 393.0,426.8 Q386.0,429.6 379.0,426.8 Q370.4,429.6 362.0,426.1 Q351.4,427.7 342.0,422.4 Q335.0,420.3 331.8,413.8 Q323.1,413.4 318.0,406.5 Q311.4,408.8 305.0,406.0 Q297.8,401.3 295.6,393.0 Q291.6,383.2 294.5,373.0 Q293.9,363.5 299.6,356.0 Q289.7,351.1 285.6,340.9 Q279.9,335.0 279.8,326.9 Q273.6,318.0 277.5,308.0 Q274.7,298.2 280.7,290.0 Q283.3,280.5 291.4,274.8 Q296.4,266.8 305.5,264.8 Q312.6,256.5 323.4,254.9 Q332.3,247.0 344.1,246.4 Q343.1,237.8 348.5,231.0 Q339.9,225.9 340.0,216.0 Q333.0,213.5 332.5,206.0 Q330.1,196.4 335.8,188.4 Q339.0,183.3 345.0,183.0 Z" fill="#ade3d2"/>
<g clip-path="url(#mc)" stroke="#cdebe0" stroke-width="1"><line x1="262.1" y1="150" x2="262.1" y2="440"/><line x1="288.0" y1="150" x2="288.0" y2="440"/><line x1="313.8" y1="150" x2="313.8" y2="440"/><line x1="339.7" y1="150" x2="339.7" y2="440"/><line x1="365.6" y1="150" x2="365.6" y2="440"/><line x1="391.4" y1="150" x2="391.4" y2="440"/><line x1="417.2" y1="150" x2="417.2" y2="440"/><line x1="443.1" y1="150" x2="443.1" y2="440"/><line x1="468.9" y1="150" x2="468.9" y2="440"/><line x1="494.8" y1="150" x2="494.8" y2="440"/><line x1="520.6" y1="150" x2="520.6" y2="440"/><line x1="546.5" y1="150" x2="546.5" y2="440"/><line x1="572.4" y1="150" x2="572.4" y2="440"/><line x1="598.2" y1="150" x2="598.2" y2="440"/><line x1="624.0" y1="150" x2="624.0" y2="440"/><line x1="649.9" y1="150" x2="649.9" y2="440"/><line x1="675.8" y1="150" x2="675.8" y2="440"/><line x1="701.6" y1="150" x2="701.6" y2="440"/><line x1="270" y1="161.1" x2="720" y2="161.1"/><line x1="270" y1="187.0" x2="720" y2="187.0"/><line x1="270" y1="212.9" x2="720" y2="212.9"/><line x1="270" y1="238.8" x2="720" y2="238.8"/><line x1="270" y1="264.7" x2="720" y2="264.7"/><line x1="270" y1="290.6" x2="720" y2="290.6"/><line x1="270" y1="316.5" x2="720" y2="316.5"/><line x1="270" y1="342.4" x2="720" y2="342.4"/><line x1="270" y1="368.3" x2="720" y2="368.3"/><line x1="270" y1="394.2" x2="720" y2="394.2"/><line x1="270" y1="420.1" x2="720" y2="420.1"/></g>
<circle cx="247" cy="163" r="95" fill="#0fa373"/>
<g clip-path="url(#cl1)" stroke="#f4fffb" stroke-width="2.6"><line x1="-102.0" y1="-220.0" x2="498.0" y2="242.0"/><line x1="-102.0" y1="-182.5" x2="498.0" y2="279.5"/><line x1="-102.0" y1="-145.0" x2="498.0" y2="317.0"/><line x1="-102.0" y1="-107.0" x2="498.0" y2="355.0"/><line x1="-102.0" y1="-69.5" x2="498.0" y2="392.5"/><line x1="-102.0" y1="-32.0" x2="498.0" y2="430.0"/><line x1="-102.0" y1="5.5" x2="498.0" y2="467.5"/><line x1="-102.0" y1="43.0" x2="498.0" y2="505.0"/></g>
<g fill="none" stroke="#7bbfa7" stroke-width="5"><circle cx="645.5" cy="199.8" r="13.2"/><circle cx="327.3" cy="396.4" r="13.2"/></g>
<g stroke-width="5.4" stroke-linecap="round">
<line x1="499.5" y1="156.7" x2="519.7" y2="156.7" stroke="#1de6a6"/>
<line x1="531.2" y1="156.7" x2="554.5" y2="156.7" stroke="#17d39a"/>
<line x1="567.5" y1="156.7" x2="590.3" y2="156.7" stroke="#13bb86"/>
<line x1="604.5" y1="156.7" x2="627.5" y2="156.7" stroke="#10a675"/>
<line x1="313.2" y1="440.3" x2="336.4" y2="440.3" stroke="#10a675"/>
<line x1="350.5" y1="440.3" x2="373.1" y2="440.3" stroke="#13bb86"/>
<line x1="386.5" y1="440.3" x2="409.1" y2="440.3" stroke="#17d39a"/>
<line x1="421.3" y1="440.3" x2="441.3" y2="440.3" stroke="#1de6a6"/>
</g>
<g transform="translate(-1.8,2.1)" fill="none" stroke="#ffffff" stroke-width="4.5" stroke-linecap="round" stroke-linejoin="round"><path d="M296,313.5 C296,320 297,327 300,330.5 C302,333 303.5,331 304.5,327 C306,320 307.5,314 310,314 C313,314 313.5,320 313.5,325 C313.5,330 315,332 318,331.5 C324,330 330,315 333,306 C335.5,299 338,295 341.5,295 C345,295 346,299 345,304 C344,309 339.5,313.5 337.5,317.5 C335.5,321.5 334.5,327 334,330.5 C337,320 342,314.5 347,314.5 C352,314.5 353,320 353.5,326 C354,331 358,332 362,329"/>
<ellipse cx="372.4" cy="322" rx="7.4" ry="8"/>
<path d="M367.5,304.5 L377,300.5"/>
<path d="M379.5,318 C384,313.5 389,311.5 391,315 C393,318.5 393,326 393.5,331 C396,320 400,313.5 405,313.5 C409.5,313.5 409.5,322 410,331 C413,320 416,315.5 419.5,316.5 C423.5,317.5 424,326 425,330.5 C426,334 429.5,332 430.5,328"/>
<path d="M438,315.3 C441,312 444,312 447,312.3 C452,312.5 458,312 463.4,311.3"/>
<path d="M454.3,304 C453.5,312 453,322 453,328 C453,332.5 456,333.5 459.5,332 C463,330 466,326 468,322"/>
<ellipse cx="476.5" cy="323" rx="6.4" ry="6.8"/>
<path d="M466.4,309.2 L472.5,305 L479.5,309.2"/>
<path d="M480,302.7 L486.6,300"/>
<path d="M481.6,315.3 C488,313 498,312.5 507.8,312.3"/>
<path d="M495.7,304 C495,312 494.7,322 494.7,328 C494.7,332.5 498,333.5 502,331 C506,329 509,324 511,320"/>
<path d="M529.8,318.4 C532,315 535,313.6 537,313.6 C545,312.5 552,311 559.6,310.6"/>
<path d="M545.5,303 C545.5,312 545.5,322 545.8,328 C546,332.5 549,333 552.4,331.5 C557,329 562,314 565,304 C567.5,296 571,291.5 575,291.5 C579,291.5 580,296 579,301 C578,307 572,313 568.5,318 C566.5,322 566,327 566,331 C569,320 573,314.5 577,314.5 C581.5,314.5 581,324 581.5,330 C583,333 586,332 589,328.5"/>
<ellipse cx="597.8" cy="323" rx="6.2" ry="6.8"/>
<path d="M604.5,315 C605,320 605,326 606,329.5 C607,333 610,332 612,328.5"/>
<path d="M596.5,304 L602.5,298.5 L609.6,303"/>
<path d="M618.4,308.5 C628,307 640,306 648.5,305.8"/>
<path d="M635.6,297 C635.6,310 635.4,322 635.6,328.5 C636,333 640,333 645,329.5 C649,326.5 652,323 653.9,319.8"/></g>
<g transform="translate(-1.8,2.1)" fill="#fff"><rect x="602" y="339.5" width="4.6" height="4.6" rx="1"/><rect x="672" y="327" width="4.6" height="4.6" rx="1"/></g>
<g fill="none" stroke="#13a97b" stroke-width="4.3" stroke-linecap="round" stroke-linejoin="round"><path d="M296,313.5 C296,320 297,327 300,330.5 C302,333 303.5,331 304.5,327 C306,320 307.5,314 310,314 C313,314 313.5,320 313.5,325 C313.5,330 315,332 318,331.5 C324,330 330,315 333,306 C335.5,299 338,295 341.5,295 C345,295 346,299 345,304 C344,309 339.5,313.5 337.5,317.5 C335.5,321.5 334.5,327 334,330.5 C337,320 342,314.5 347,314.5 C352,314.5 353,320 353.5,326 C354,331 358,332 362,329"/>
<ellipse cx="372.4" cy="322" rx="7.4" ry="8"/>
<path d="M367.5,304.5 L377,300.5"/>
<path d="M379.5,318 C384,313.5 389,311.5 391,315 C393,318.5 393,326 393.5,331 C396,320 400,313.5 405,313.5 C409.5,313.5 409.5,322 410,331 C413,320 416,315.5 419.5,316.5 C423.5,317.5 424,326 425,330.5 C426,334 429.5,332 430.5,328"/>
<path d="M438,315.3 C441,312 444,312 447,312.3 C452,312.5 458,312 463.4,311.3"/>
<path d="M454.3,304 C453.5,312 453,322 453,328 C453,332.5 456,333.5 459.5,332 C463,330 466,326 468,322"/>
<ellipse cx="476.5" cy="323" rx="6.4" ry="6.8"/>
<path d="M466.4,309.2 L472.5,305 L479.5,309.2"/>
<path d="M480,302.7 L486.6,300"/>
<path d="M481.6,315.3 C488,313 498,312.5 507.8,312.3"/>
<path d="M495.7,304 C495,312 494.7,322 494.7,328 C494.7,332.5 498,333.5 502,331 C506,329 509,324 511,320"/>
<path d="M529.8,318.4 C532,315 535,313.6 537,313.6 C545,312.5 552,311 559.6,310.6"/>
<path d="M545.5,303 C545.5,312 545.5,322 545.8,328 C546,332.5 549,333 552.4,331.5 C557,329 562,314 565,304 C567.5,296 571,291.5 575,291.5 C579,291.5 580,296 579,301 C578,307 572,313 568.5,318 C566.5,322 566,327 566,331 C569,320 573,314.5 577,314.5 C581.5,314.5 581,324 581.5,330 C583,333 586,332 589,328.5"/>
<ellipse cx="597.8" cy="323" rx="6.2" ry="6.8"/>
<path d="M604.5,315 C605,320 605,326 606,329.5 C607,333 610,332 612,328.5"/>
<path d="M596.5,304 L602.5,298.5 L609.6,303"/>
<path d="M618.4,308.5 C628,307 640,306 648.5,305.8"/>
<path d="M635.6,297 C635.6,310 635.4,322 635.6,328.5 C636,333 640,333 645,329.5 C649,326.5 652,323 653.9,319.8"/></g>
<g fill="#13a97b"><rect x="602" y="339.5" width="4.6" height="4.6" rx="1"/><rect x="672" y="327" width="4.6" height="4.6" rx="1"/></g>
<circle cx="711" cy="441" r="95" fill="#0fa373"/>
<g clip-path="url(#cl2)" stroke="#f4fffb" stroke-width="2.6"><line x1="300.0" y1="-21.5" x2="900.0" y2="440.5"/><line x1="300.0" y1="16.0" x2="900.0" y2="478.0"/><line x1="300.0" y1="53.5" x2="900.0" y2="515.5"/><line x1="300.0" y1="91.0" x2="900.0" y2="553.0"/><line x1="300.0" y1="128.5" x2="900.0" y2="590.5"/><line x1="300.0" y1="166.0" x2="900.0" y2="628.0"/><line x1="300.0" y1="204.0" x2="900.0" y2="666.0"/><line x1="300.0" y1="241.5" x2="900.0" y2="703.5"/><line x1="300.0" y1="279.0" x2="900.0" y2="741.0"/></g></svg>
<div class="a" style="left:818px;top:73px;width:14px;height:443px;background:linear-gradient(to right,#3e3e3e,#2c2c2c)"></div>
<div class="a" style="left:818px;top:73px;width:14px;height:12px;background:#2a2a2a"></div>
<svg style="left:821px;top:75px" width="9" height="7" viewBox="0 0 9 7"><path d="M4.5,0.5 L8.5,6.5 H0.5 Z" fill="#c8c8c8"/></svg>
<div class="a" style="left:818.5px;top:237.5px;width:13.5px;height:109.5px;background:#6a6a6a;border-radius:4px"></div>
<div class="a" style="left:818px;top:505px;width:14px;height:11px;background:#2a2a2a"></div>
<svg style="left:821px;top:507px" width="9" height="7" viewBox="0 0 9 7"><path d="M4.5,6.5 L8.5,0.5 H0.5 Z" fill="#c8c8c8"/></svg>
<div class="a" style="left:178px;top:516px;width:654px;height:13px;background:linear-gradient(#3e3e3e,#2c2c2c)"></div>
<div class="a" style="left:178px;top:516px;width:12px;height:13px;background:#2a2a2a"></div>
<svg style="left:180px;top:518.5px" width="7" height="9" viewBox="0 0 7 9"><path d="M0.5,4.5 L6.5,0.5 V8.5 Z" fill="#c8c8c8"/></svg>
<div class="a" style="left:429px;top:516.5px;width:163px;height:12.5px;background:#6a6a6a;border-radius:4px"></div>
<div class="a" style="left:820px;top:516px;width:12px;height:13px;background:#2a2a2a"></div>
<svg style="left:825px;top:518.5px" width="7" height="9" viewBox="0 0 7 9"><path d="M6.5,4.5 L0.5,0.5 V8.5 Z" fill="#c8c8c8"/></svg>
<div class="a" style="left:178px;top:529px;width:655px;height:1px;background:#3a4650"></div>
<div class="a" style="left:832px;top:57px;width:4px;height:473px;background:#1e1e1e"></div>
<div class="a" style="left:833px;top:60px;width:1px;height:470px;background:#3a4a55"></div>
<div class="a" style="left:836px;top:57px;width:188px;height:473px;background:#262626"></div>
<div class="ph" style="left:836px;top:57px;width:188px"></div>
<div class="t" style="left:903.4px;top:59.5px;font-size:9.6px;color:#cdcdcd;letter-spacing:0;transform:scaleX(0.8395);transform-origin:0 0;">Hoa tiêu</div>
<svg style="left:1001.0px;top:61.5px" width="8.5" height="8.5" viewBox="0 0 8.5 8.5"><path d="M4.5,1.2 H1.2 V7.3 H7.3 V4" stroke="#cfcfcf" stroke-width="1.2" fill="none"/><path d="M3.5,5 L7.2,1.3" stroke="#cfcfcf" stroke-width="1.1"/><rect x="5.5" y="0" width="2.5" height="2.5" fill="#cfcfcf"/></svg>
<svg style="left:1013.6px;top:61.7px" width="7" height="7" viewBox="0 0 7 7"><path d="M0.8,0.8 L6.2,6.2 M6.2,0.8 L0.8,6.2" stroke="#dedede" stroke-width="1.8"/></svg>
<div class="a" style="left:836px;top:73px;width:188px;height:22px;background:#262626"></div>
<div class="tb" style="left:839.5px;top:75.5px;width:17.5px;height:17.5px;background:#474747;"></div>
<div class="tb" style="left:864.5px;top:75.5px;width:17.5px;height:17.5px;background:#474747;"></div>
<div class="tb" style="left:885.0px;top:75.5px;width:17.5px;height:17.5px;background:#474747;"></div>
<div class="tb" style="left:905.5px;top:75.5px;width:17.5px;height:17.5px;background:#474747;"></div>
<div class="tb" style="left:931.5px;top:75.5px;width:17.5px;height:17.5px;background:#474747;"></div>
<div class="tb" style="left:952.0px;top:75.5px;width:17.5px;height:17.5px;background:#222;border:1px solid #4a4a4a;"></div>
<div class="tb" style="left:971.5px;top:75.5px;width:17.5px;height:17.5px;background:#474747;"></div>
<div class="tb" style="left:997.0px;top:75.5px;width:17.5px;height:17.5px;background:#474747;"></div>
<div class="a" style="left:860.5px;top:79px;width:1px;height:10px;background:#666"></div>
<div class="a" style="left:927.0px;top:79px;width:1px;height:10px;background:#666"></div>
<div class="a" style="left:993.5px;top:79px;width:1px;height:10px;background:#666"></div>
<svg style="left:839.5px;top:75.5px" width="17.5" height="17.5" viewBox="0 0 17.5 17.5"><g transform="translate(1.6,1.6) scale(0.82)"><circle cx="7.5" cy="7.5" r="4.5" fill="none" stroke="#e8e8e8" stroke-width="1.5"/><path d="M10.8,10.8 L14.5,14.5" stroke="#e8e8e8" stroke-width="2"/><path d="M7.5,5 V10" stroke="#e8e8e8" stroke-width="1.3"/></g></svg>
<svg style="left:864.5px;top:75.5px" width="17.5" height="17.5" viewBox="0 0 17.5 17.5"><g transform="translate(1.6,1.6) scale(0.82)"><circle cx="7.5" cy="7.5" r="4.5" fill="none" stroke="#e8e8e8" stroke-width="1.5"/><path d="M10.8,10.8 L14.5,14.5" stroke="#e8e8e8" stroke-width="2"/><path d="M5,7.5 H10 M7.5,5 V10" stroke="#e8e8e8" stroke-width="1.3"/></g></svg>
<svg style="left:885.0px;top:75.5px" width="17.5" height="17.5" viewBox="0 0 17.5 17.5"><g transform="translate(1.6,1.6) scale(0.82)"><rect x="2.5" y="3" width="12.5" height="11.5" fill="none" stroke="#e8e8e8" stroke-width="1.2"/><path d="M5,5.5 L7,7.5 M12.5,5.5 L10.5,7.5 M5,12 L7,10 M12.5,12 L10.5,10" stroke="#e8e8e8" stroke-width="1.2"/></g></svg>
<svg style="left:905.5px;top:75.5px" width="17.5" height="17.5" viewBox="0 0 17.5 17.5"><g transform="translate(1.6,1.6) scale(0.82)"><circle cx="7.5" cy="7.5" r="4.5" fill="none" stroke="#e8e8e8" stroke-width="1.5"/><path d="M10.8,10.8 L14.5,14.5" stroke="#e8e8e8" stroke-width="2"/><path d="M5,7.5 H10" stroke="#e8e8e8" stroke-width="1.3"/></g></svg>
<svg style="left:931.5px;top:75.5px" width="17.5" height="17.5" viewBox="0 0 17.5 17.5"><g transform="translate(1.6,1.6) scale(0.82)"><circle cx="8.75" cy="8.75" r="5.8" fill="none" stroke="#e8e8e8" stroke-width="1.5"/><rect x="5.5" y="6" width="6" height="5" transform="rotate(-20 8.5 8.5)" fill="#e8e8e8"/></g></svg>
<svg style="left:952.0px;top:75.5px" width="17.5" height="17.5" viewBox="0 0 17.5 17.5"><g transform="translate(1.6,1.6) scale(0.82)"><rect x="4.5" y="5" width="8.5" height="7.5" fill="#e8e8e8"/><path d="M2.5,3 L5,5.5 M15,3 L12.5,5.5 M2.5,14.5 L5,12 M15,14.5 L12.5,12" stroke="#e8e8e8" stroke-width="1.2"/></g></svg>
<svg style="left:971.5px;top:75.5px" width="17.5" height="17.5" viewBox="0 0 17.5 17.5"><g transform="translate(1.6,1.6) scale(0.82)"><circle cx="8.75" cy="8.75" r="5.8" fill="none" stroke="#e8e8e8" stroke-width="1.5"/><rect x="5.5" y="6" width="6" height="5" transform="rotate(20 8.5 8.5)" fill="#e8e8e8"/></g></svg>
<svg style="left:997.0px;top:75.5px" width="17.5" height="17.5" viewBox="0 0 17.5 17.5"><g transform="translate(1.6,1.6) scale(0.82)"><rect x="2.5" y="7" width="5" height="8" fill="#e8e8e8"/><rect x="9.5" y="7" width="5" height="8" fill="none" stroke="#e8e8e8" stroke-width="1.1"/><path d="M4.5,7 V4.5 C4.5,2 9.5,2 9.5,4.5 V7" stroke="#e8e8e8" stroke-width="1.1" fill="none"/></g></svg>
<div class="a" style="left:836px;top:95px;width:188px;height:45px;background:#4a4846"></div>
<div class="a" style="left:894px;top:95px;width:3px;height:45px;background:#c8282a"></div>
<div class="a" style="left:967px;top:95px;width:3px;height:45px;background:#c8282a"></div>
<svg style="left:897px;top:96px" width="66" height="44" viewBox="198 114 562 376" preserveAspectRatio="none"><defs>
<clipPath id="cl1p"><circle cx="247" cy="163" r="95"/></clipPath>
<clipPath id="cl2p"><circle cx="711" cy="441" r="95"/></clipPath>
<clipPath id="mcp"><path d="M345.0,183.0 Q349.2,175.2 358.0,175.9 Q364.5,170.8 372.0,174.3 Q381.2,169.8 391.0,172.8 Q397.4,169.3 404.0,172.2 Q412.8,167.3 422.0,171.4 Q429.9,167.9 438.0,170.7 Q444.4,167.1 451.0,170.2 Q459.9,166.4 469.0,169.5 Q475.4,166.6 482.0,169.2 Q490.5,165.8 499.0,168.9 Q505.4,164.9 512.0,168.7 Q519.2,168.8 524.1,174.0 Q531.0,168.7 539.6,170.4 Q550.1,167.5 559.9,172.5 Q567.6,169.4 573.8,175.0 Q582.0,174.4 588.2,179.7 Q598.5,177.7 607.0,183.7 Q618.9,183.1 628.1,190.6 Q638.6,189.7 645.0,198.0 Q653.9,201.3 655.1,210.6 Q665.6,216.3 668.0,228.0 Q669.4,234.3 665.6,239.6 Q671.0,247.8 668.5,257.4 Q667.4,266.0 660.0,270.5 Q662.2,278.6 655.9,284.0 Q662.0,288.5 660.3,296.0 Q668.3,295.8 674.0,301.5 Q684.4,304.9 690.7,313.8 Q697.6,318.0 699.1,325.9 Q705.6,333.2 705.4,343.0 Q710.9,351.9 708.1,362.0 Q711.6,370.3 706.4,377.7 Q705.7,387.2 698.4,393.3 Q694.8,399.4 688.0,401.6 Q684.2,407.8 677.0,408.4 Q670.5,412.9 663.0,410.6 Q654.1,416.3 644.0,413.4 Q635.8,419.0 627.0,414.3 Q619.1,419.1 611.0,414.7 Q602.1,419.1 593.0,415.0 Q584.5,419.4 576.0,415.0 Q568.5,419.3 561.0,415.0 Q551.1,418.4 541.0,415.5 Q531.6,420.8 522.0,415.9 Q514.6,420.6 507.0,416.3 Q498.1,421.4 489.0,416.6 Q480.1,421.6 471.0,417.0 Q461.4,423.2 450.0,421.8 Q440.6,427.2 430.0,424.8 Q422.8,428.6 415.0,426.1 Q404.1,430.9 393.0,426.8 Q386.0,429.6 379.0,426.8 Q370.4,429.6 362.0,426.1 Q351.4,427.7 342.0,422.4 Q335.0,420.3 331.8,413.8 Q323.1,413.4 318.0,406.5 Q311.4,408.8 305.0,406.0 Q297.8,401.3 295.6,393.0 Q291.6,383.2 294.5,373.0 Q293.9,363.5 299.6,356.0 Q289.7,351.1 285.6,340.9 Q279.9,335.0 279.8,326.9 Q273.6,318.0 277.5,308.0 Q274.7,298.2 280.7,290.0 Q283.3,280.5 291.4,274.8 Q296.4,266.8 305.5,264.8 Q312.6,256.5 323.4,254.9 Q332.3,247.0 344.1,246.4 Q343.1,237.8 348.5,231.0 Q339.9,225.9 340.0,216.0 Q333.0,213.5 332.5,206.0 Q330.1,196.4 335.8,188.4 Q339.0,183.3 345.0,183.0 Z"/></clipPath>
</defs>
<rect x="198" y="114" width="562" height="376" fill="#fff"/>
<path d="M345.0,183.0 Q349.2,175.2 358.0,175.9 Q364.5,170.8 372.0,174.3 Q381.2,169.8 391.0,172.8 Q397.4,169.3 404.0,172.2 Q412.8,167.3 422.0,171.4 Q429.9,167.9 438.0,170.7 Q444.4,167.1 451.0,170.2 Q459.9,166.4 469.0,169.5 Q475.4,166.6 482.0,169.2 Q490.5,165.8 499.0,168.9 Q505.4,164.9 512.0,168.7 Q519.2,168.8 524.1,174.0 Q531.0,168.7 539.6,170.4 Q550.1,167.5 559.9,172.5 Q567.6,169.4 573.8,175.0 Q582.0,174.4 588.2,179.7 Q598.5,177.7 607.0,183.7 Q618.9,183.1 628.1,190.6 Q638.6,189.7 645.0,198.0 Q653.9,201.3 655.1,210.6 Q665.6,216.3 668.0,228.0 Q669.4,234.3 665.6,239.6 Q671.0,247.8 668.5,257.4 Q667.4,266.0 660.0,270.5 Q662.2,278.6 655.9,284.0 Q662.0,288.5 660.3,296.0 Q668.3,295.8 674.0,301.5 Q684.4,304.9 690.7,313.8 Q697.6,318.0 699.1,325.9 Q705.6,333.2 705.4,343.0 Q710.9,351.9 708.1,362.0 Q711.6,370.3 706.4,377.7 Q705.7,387.2 698.4,393.3 Q694.8,399.4 688.0,401.6 Q684.2,407.8 677.0,408.4 Q670.5,412.9 663.0,410.6 Q654.1,416.3 644.0,413.4 Q635.8,419.0 627.0,414.3 Q619.1,419.1 611.0,414.7 Q602.1,419.1 593.0,415.0 Q584.5,419.4 576.0,415.0 Q568.5,419.3 561.0,415.0 Q551.1,418.4 541.0,415.5 Q531.6,420.8 522.0,415.9 Q514.6,420.6 507.0,416.3 Q498.1,421.4 489.0,416.6 Q480.1,421.6 471.0,417.0 Q461.4,423.2 450.0,421.8 Q440.6,427.2 430.0,424.8 Q422.8,428.6 415.0,426.1 Q404.1,430.9 393.0,426.8 Q386.0,429.6 379.0,426.8 Q370.4,429.6 362.0,426.1 Q351.4,427.7 342.0,422.4 Q335.0,420.3 331.8,413.8 Q323.1,413.4 318.0,406.5 Q311.4,408.8 305.0,406.0 Q297.8,401.3 295.6,393.0 Q291.6,383.2 294.5,373.0 Q293.9,363.5 299.6,356.0 Q289.7,351.1 285.6,340.9 Q279.9,335.0 279.8,326.9 Q273.6,318.0 277.5,308.0 Q274.7,298.2 280.7,290.0 Q283.3,280.5 291.4,274.8 Q296.4,266.8 305.5,264.8 Q312.6,256.5 323.4,254.9 Q332.3,247.0 344.1,246.4 Q343.1,237.8 348.5,231.0 Q339.9,225.9 340.0,216.0 Q333.0,213.5 332.5,206.0 Q330.1,196.4 335.8,188.4 Q339.0,183.3 345.0,183.0 Z" fill="#ade3d2"/>
<g clip-path="url(#mcp)" stroke="#cdebe0" stroke-width="1"><line x1="262.1" y1="150" x2="262.1" y2="440"/><line x1="288.0" y1="150" x2="288.0" y2="440"/><line x1="313.8" y1="150" x2="313.8" y2="440"/><line x1="339.7" y1="150" x2="339.7" y2="440"/><line x1="365.6" y1="150" x2="365.6" y2="440"/><line x1="391.4" y1="150" x2="391.4" y2="440"/><line x1="417.2" y1="150" x2="417.2" y2="440"/><line x1="443.1" y1="150" x2="443.1" y2="440"/><line x1="468.9" y1="150" x2="468.9" y2="440"/><line x1="494.8" y1="150" x2="494.8" y2="440"/><line x1="520.6" y1="150" x2="520.6" y2="440"/><line x1="546.5" y1="150" x2="546.5" y2="440"/><line x1="572.4" y1="150" x2="572.4" y2="440"/><line x1="598.2" y1="150" x2="598.2" y2="440"/><line x1="624.0" y1="150" x2="624.0" y2="440"/><line x1="649.9" y1="150" x2="649.9" y2="440"/><line x1="675.8" y1="150" x2="675.8" y2="440"/><line x1="701.6" y1="150" x2="701.6" y2="440"/><line x1="270" y1="161.1" x2="720" y2="161.1"/><line x1="270" y1="187.0" x2="720" y2="187.0"/><line x1="270" y1="212.9" x2="720" y2="212.9"/><line x1="270" y1="238.8" x2="720" y2="238.8"/><line x1="270" y1="264.7" x2="720" y2="264.7"/><line x1="270" y1="290.6" x2="720" y2="290.6"/><line x1="270" y1="316.5" x2="720" y2="316.5"/><line x1="270" y1="342.4" x2="720" y2="342.4"/><line x1="270" y1="368.3" x2="720" y2="368.3"/><line x1="270" y1="394.2" x2="720" y2="394.2"/><line x1="270" y1="420.1" x2="720" y2="420.1"/></g>
<circle cx="247" cy="163" r="95" fill="#0fa373"/>
<g clip-path="url(#cl1p)" stroke="#f4fffb" stroke-width="2.6"><line x1="-102.0" y1="-220.0" x2="498.0" y2="242.0"/><line x1="-102.0" y1="-182.5" x2="498.0" y2="279.5"/><line x1="-102.0" y1="-145.0" x2="498.0" y2="317.0"/><line x1="-102.0" y1="-107.0" x2="498.0" y2="355.0"/><line x1="-102.0" y1="-69.5" x2="498.0" y2="392.5"/><line x1="-102.0" y1="-32.0" x2="498.0" y2="430.0"/><line x1="-102.0" y1="5.5" x2="498.0" y2="467.5"/><line x1="-102.0" y1="43.0" x2="498.0" y2="505.0"/></g>
<g fill="none" stroke="#7bbfa7" stroke-width="5"><circle cx="645.5" cy="199.8" r="13.2"/><circle cx="327.3" cy="396.4" r="13.2"/></g>
<g stroke-width="5.4" stroke-linecap="round">
<line x1="499.5" y1="156.7" x2="519.7" y2="156.7" stroke="#1de6a6"/>
<line x1="531.2" y1="156.7" x2="554.5" y2="156.7" stroke="#17d39a"/>
<line x1="567.5" y1="156.7" x2="590.3" y2="156.7" stroke="#13bb86"/>
<line x1="604.5" y1="156.7" x2="627.5" y2="156.7" stroke="#10a675"/>
<line x1="313.2" y1="440.3" x2="336.4" y2="440.3" stroke="#10a675"/>
<line x1="350.5" y1="440.3" x2="373.1" y2="440.3" stroke="#13bb86"/>
<line x1="386.5" y1="440.3" x2="409.1" y2="440.3" stroke="#17d39a"/>
<line x1="421.3" y1="440.3" x2="441.3" y2="440.3" stroke="#1de6a6"/>
</g>
<g transform="translate(-1.8,2.1)" fill="none" stroke="#ffffff" stroke-width="4.5" stroke-linecap="round" stroke-linejoin="round"><path d="M296,313.5 C296,320 297,327 300,330.5 C302,333 303.5,331 304.5,327 C306,320 307.5,314 310,314 C313,314 313.5,320 313.5,325 C313.5,330 315,332 318,331.5 C324,330 330,315 333,306 C335.5,299 338,295 341.5,295 C345,295 346,299 345,304 C344,309 339.5,313.5 337.5,317.5 C335.5,321.5 334.5,327 334,330.5 C337,320 342,314.5 347,314.5 C352,314.5 353,320 353.5,326 C354,331 358,332 362,329"/>
<ellipse cx="372.4" cy="322" rx="7.4" ry="8"/>
<path d="M367.5,304.5 L377,300.5"/>
<path d="M379.5,318 C384,313.5 389,311.5 391,315 C393,318.5 393,326 393.5,331 C396,320 400,313.5 405,313.5 C409.5,313.5 409.5,322 410,331 C413,320 416,315.5 419.5,316.5 C423.5,317.5 424,326 425,330.5 C426,334 429.5,332 430.5,328"/>
<path d="M438,315.3 C441,312 444,312 447,312.3 C452,312.5 458,312 463.4,311.3"/>
<path d="M454.3,304 C453.5,312 453,322 453,328 C453,332.5 456,333.5 459.5,332 C463,330 466,326 468,322"/>
<ellipse cx="476.5" cy="323" rx="6.4" ry="6.8"/>
<path d="M466.4,309.2 L472.5,305 L479.5,309.2"/>
<path d="M480,302.7 L486.6,300"/>
<path d="M481.6,315.3 C488,313 498,312.5 507.8,312.3"/>
<path d="M495.7,304 C495,312 494.7,322 494.7,328 C494.7,332.5 498,333.5 502,331 C506,329 509,324 511,320"/>
<path d="M529.8,318.4 C532,315 535,313.6 537,313.6 C545,312.5 552,311 559.6,310.6"/>
<path d="M545.5,303 C545.5,312 545.5,322 545.8,328 C546,332.5 549,333 552.4,331.5 C557,329 562,314 565,304 C567.5,296 571,291.5 575,291.5 C579,291.5 580,296 579,301 C578,307 572,313 568.5,318 C566.5,322 566,327 566,331 C569,320 573,314.5 577,314.5 C581.5,314.5 581,324 581.5,330 C583,333 586,332 589,328.5"/>
<ellipse cx="597.8" cy="323" rx="6.2" ry="6.8"/>
<path d="M604.5,315 C605,320 605,326 606,329.5 C607,333 610,332 612,328.5"/>
<path d="M596.5,304 L602.5,298.5 L609.6,303"/>
<path d="M618.4,308.5 C628,307 640,306 648.5,305.8"/>
<path d="M635.6,297 C635.6,310 635.4,322 635.6,328.5 C636,333 640,333 645,329.5 C649,326.5 652,323 653.9,319.8"/></g>
<g transform="translate(-1.8,2.1)" fill="#fff"><rect x="602" y="339.5" width="4.6" height="4.6" rx="1"/><rect x="672" y="327" width="4.6" height="4.6" rx="1"/></g>
<g fill="none" stroke="#13a97b" stroke-width="4.3" stroke-linecap="round" stroke-linejoin="round"><path d="M296,313.5 C296,320 297,327 300,330.5 C302,333 303.5,331 304.5,327 C306,320 307.5,314 310,314 C313,314 313.5,320 313.5,325 C313.5,330 315,332 318,331.5 C324,330 330,315 333,306 C335.5,299 338,295 341.5,295 C345,295 346,299 345,304 C344,309 339.5,313.5 337.5,317.5 C335.5,321.5 334.5,327 334,330.5 C337,320 342,314.5 347,314.5 C352,314.5 353,320 353.5,326 C354,331 358,332 362,329"/>
<ellipse cx="372.4" cy="322" rx="7.4" ry="8"/>
<path d="M367.5,304.5 L377,300.5"/>
<path d="M379.5,318 C384,313.5 389,311.5 391,315 C393,318.5 393,326 393.5,331 C396,320 400,313.5 405,313.5 C409.5,313.5 409.5,322 410,331 C413,320 416,315.5 419.5,316.5 C423.5,317.5 424,326 425,330.5 C426,334 429.5,332 430.5,328"/>
<path d="M438,315.3 C441,312 444,312 447,312.3 C452,312.5 458,312 463.4,311.3"/>
<path d="M454.3,304 C453.5,312 453,322 453,328 C453,332.5 456,333.5 459.5,332 C463,330 466,326 468,322"/>
<ellipse cx="476.5" cy="323" rx="6.4" ry="6.8"/>
<path d="M466.4,309.2 L472.5,305 L479.5,309.2"/>
<path d="M480,302.7 L486.6,300"/>
<path d="M481.6,315.3 C488,313 498,312.5 507.8,312.3"/>
<path d="M495.7,304 C495,312 494.7,322 494.7,328 C494.7,332.5 498,333.5 502,331 C506,329 509,324 511,320"/>
<path d="M529.8,318.4 C532,315 535,313.6 537,313.6 C545,312.5 552,311 559.6,310.6"/>
<path d="M545.5,303 C545.5,312 545.5,322 545.8,328 C546,332.5 549,333 552.4,331.5 C557,329 562,314 565,304 C567.5,296 571,291.5 575,291.5 C579,291.5 580,296 579,301 C578,307 572,313 568.5,318 C566.5,322 566,327 566,331 C569,320 573,314.5 577,314.5 C581.5,314.5 581,324 581.5,330 C583,333 586,332 589,328.5"/>
<ellipse cx="597.8" cy="323" rx="6.2" ry="6.8"/>
<path d="M604.5,315 C605,320 605,326 606,329.5 C607,333 610,332 612,328.5"/>
<path d="M596.5,304 L602.5,298.5 L609.6,303"/>
<path d="M618.4,308.5 C628,307 640,306 648.5,305.8"/>
<path d="M635.6,297 C635.6,310 635.4,322 635.6,328.5 C636,333 640,333 645,329.5 C649,326.5 652,323 653.9,319.8"/></g>
<g fill="#13a97b"><rect x="602" y="339.5" width="4.6" height="4.6" rx="1"/><rect x="672" y="327" width="4.6" height="4.6" rx="1"/></g>
<circle cx="711" cy="441" r="95" fill="#0fa373"/>
<g clip-path="url(#cl2p)" stroke="#f4fffb" stroke-width="2.6"><line x1="300.0" y1="-21.5" x2="900.0" y2="440.5"/><line x1="300.0" y1="16.0" x2="900.0" y2="478.0"/><line x1="300.0" y1="53.5" x2="900.0" y2="515.5"/><line x1="300.0" y1="91.0" x2="900.0" y2="553.0"/><line x1="300.0" y1="128.5" x2="900.0" y2="590.5"/><line x1="300.0" y1="166.0" x2="900.0" y2="628.0"/><line x1="300.0" y1="204.0" x2="900.0" y2="666.0"/><line x1="300.0" y1="241.5" x2="900.0" y2="703.5"/><line x1="300.0" y1="279.0" x2="900.0" y2="741.0"/></g></svg>
<div class="a" style="left:963px;top:95px;width:4px;height:45px;background:#3a3a3a"></div>
<div class="a" style="left:836px;top:140px;width:188px;height:4px;background:#262626"></div>
<div class="ph" style="left:836px;top:144px;width:188px"></div>
<div class="t" style="left:912.8px;top:146.5px;font-size:9.6px;color:#cdcdcd;letter-spacing:0;transform:scaleX(0.7366);transform-origin:0 0;">Lớp</div>
<svg style="left:1001.0px;top:148.7px" width="8.5" height="8.5" viewBox="0 0 8.5 8.5"><path d="M4.5,1.2 H1.2 V7.3 H7.3 V4" stroke="#cfcfcf" stroke-width="1.2" fill="none"/><path d="M3.5,5 L7.2,1.3" stroke="#cfcfcf" stroke-width="1.1"/><rect x="5.5" y="0" width="2.5" height="2.5" fill="#cfcfcf"/></svg>
<svg style="left:1013.6px;top:148.9px" width="7" height="7" viewBox="0 0 7 7"><path d="M0.8,0.8 L6.2,6.2 M6.2,0.8 L0.8,6.2" stroke="#dedede" stroke-width="1.8"/></svg>
<div class="t" style="left:841.0px;top:164.8px;font-size:9.6px;color:#d0d0d0;letter-spacing:0;transform:scaleX(0.8696);transform-origin:0 0;">Độ trong</div>
<div class="a" style="left:887px;top:164px;width:104px;height:12px;background:linear-gradient(to right,#86c8f4,#62ace8);border:1px solid #4a7898"></div>
<div class="t" style="left:996.3px;top:164.8px;font-size:9.6px;color:#d0d0d0;letter-spacing:0;transform:scaleX(0.8381);transform-origin:0 0;">100 %</div>
<div class="t" style="left:841.0px;top:183.5px;font-size:9.6px;color:#d0d0d0;letter-spacing:0;transform:scaleX(0.8269);transform-origin:0 0;">Pha trộn</div>
<div class="a" style="left:889px;top:181px;width:130px;height:16px;background:#464646;border-radius:2px"></div>
<div class="t" style="left:891.5px;top:183.5px;font-size:9.6px;color:#d0d0d0;letter-spacing:0;transform:scaleX(0.7541);transform-origin:0 0;">Thêm</div>
<svg style="left:1011px;top:187.5px" width="6" height="3.5" viewBox="0 0 6 3.5"><path d="M0,0 H6 L3,3.5 Z" fill="#b0b0b0"/></svg>
<div class="a" style="left:843.0px;top:204.5px;width:9.5px;height:9.5px;border:1px solid #b8b8b8"></div>
<div class="a" style="left:911.5px;top:204.5px;width:9.5px;height:9.5px;border:1px solid #b8b8b8"></div>
<div class="a" style="left:969.0px;top:204.5px;width:9.5px;height:9.5px;border:1px solid #b8b8b8"></div>
<svg style="left:843px;top:204.5px" width="9.5" height="9.5" viewBox="0 0 9.5 9.5"><path d="M2.5,2.5 L7,7 M7,2.5 L2.5,7" stroke="#ddd" stroke-width="1.3"/></svg>
<div class="t" style="left:856.0px;top:203.5px;font-size:9.6px;color:#d0d0d0;letter-spacing:0;transform:scaleX(0.8176);transform-origin:0 0;">Bảo vệ alpha</div>
<div class="t" style="left:924.0px;top:203.5px;font-size:9.6px;color:#d0d0d0;letter-spacing:0;transform:scaleX(0.8169);transform-origin:0 0;">Xén bớt</div>
<div class="t" style="left:981.5px;top:203.5px;font-size:9.6px;color:#d0d0d0;letter-spacing:0;transform:scaleX(0.7855);transform-origin:0 0;">Khóa</div>
<div class="a" style="left:838px;top:218px;width:170px;height:88px;background:#2e2e2e"></div>
<div class="a" style="left:839px;top:218.5px;width:168px;height:27.5px;background:#505050"></div>
<div class="a" style="left:842px;top:228.8px;width:7px;height:7px;border-radius:50%;background:radial-gradient(circle at 40% 40%,#fff,#c8c8c8)"></div>
<div class="t" style="left:902.3px;top:225.9px;font-size:9.8px;color:#e4e4e4;letter-spacing:0;transform:scaleX(0.8691);transform-origin:0 0;">Lớp9</div>
<div class="a" style="left:839px;top:247.0px;width:168px;height:29.0px;background:#505050"></div>
<div class="a" style="left:842px;top:258.0px;width:7px;height:7px;border-radius:50%;background:radial-gradient(circle at 40% 40%,#fff,#c8c8c8)"></div>
<div class="t" style="left:902.3px;top:255.2px;font-size:9.8px;color:#e4e4e4;letter-spacing:0;transform:scaleX(0.8867);transform-origin:0 0;">Lớp8</div>
<div class="a" style="left:839px;top:277.0px;width:168px;height:28.0px;background:#505050"></div>
<div class="a" style="left:842px;top:287.5px;width:7px;height:7px;border-radius:50%;background:radial-gradient(circle at 40% 40%,#fff,#c8c8c8)"></div>
<div class="t" style="left:902.3px;top:284.7px;font-size:9.8px;color:#e4e4e4;letter-spacing:0;transform:scaleX(0.9534);transform-origin:0 0;">@Cola800_#Hđ247</div>
<div class="a" style="left:864px;top:222px;width:26px;height:17.5px;background:conic-gradient(#e4e4e4 25%,#fff 0 50%,#e4e4e4 0 75%,#fff 0);background-size:5px 5px;overflow:hidden"><div class="a" style="left:-4px;top:-4px;width:9px;height:9px;border-radius:50%;background:#0fa373"></div><div class="a" style="left:20px;top:11px;width:9px;height:9px;border-radius:50%;background:#0fa373"></div></div>
<div class="a" style="left:864px;top:252px;width:26px;height:17.5px;background:conic-gradient(#e4e4e4 25%,#fff 0 50%,#e4e4e4 0 75%,#fff 0);background-size:5px 5px"><div class="a" style="left:4px;top:4px;width:18px;height:10px;border-radius:4px;background:#1db584"></div></div>
<div class="a" style="left:864px;top:290px;width:26px;height:2px;background:#ddd;opacity:.8"></div>
<div class="a" style="left:838px;top:246px;width:170px;height:1px;background:#2e2e2e"></div>
<div class="a" style="left:1009px;top:218px;width:11px;height:88px;background:#2e2e2e"></div>
<svg style="left:1010.5px;top:220px" width="8" height="6" viewBox="0 0 8 6"><path d="M4,0.5 L7.5,5.5 H0.5 Z" fill="#aaa"/></svg>
<div class="a" style="left:1009.5px;top:257px;width:10.5px;height:40px;background:#6e6e6e;border-radius:4px"></div>
<svg style="left:1010.5px;top:299px" width="8" height="6" viewBox="0 0 8 6"><path d="M4,5.5 L7.5,0.5 H0.5 Z" fill="#aaa"/></svg>
<div class="tb" style="left:842.0px;top:309px;width:16.5px;height:17px"></div>
<div class="tb" style="left:862.0px;top:309px;width:16.5px;height:17px"></div>
<div class="tb" style="left:882.0px;top:309px;width:16.5px;height:17px"></div>
<div class="tb" style="left:902.0px;top:309px;width:22.0px;height:17px"></div>
<div class="tb" style="left:927.0px;top:309px;width:17.0px;height:17px"></div>
<div class="tb" style="left:953.0px;top:309px;width:16.5px;height:17px"></div>
<div class="tb" style="left:973.0px;top:309px;width:17.0px;height:17px"></div>
<div class="tb" style="left:998.0px;top:309px;width:18.0px;height:17px"></div>
<div class="a" style="left:948.5px;top:313px;width:1px;height:9px;background:#666"></div>
<div class="a" style="left:994.5px;top:313px;width:1px;height:9px;background:#666"></div>
<svg style="left:842.0px;top:309px" width="16.5" height="17" viewBox="0 0 16.5 17"><path d="M4,3 H9.5 L12.5,6 V14 H4 Z" fill="none" stroke="#e0e0e0" stroke-width="1.1"/></svg>
<svg style="left:862.0px;top:309px" width="16.5" height="17" viewBox="0 0 16.5 17"><path d="M4,3 H9.5 L12.5,6 V14 H4 Z" fill="none" stroke="#e0e0e0" stroke-width="1.1"/><text x="8.3" y="12.5" text-anchor="middle" font-size="6.5" fill="#e0e0e0" font-family="Liberation Sans">8</text></svg>
<svg style="left:882.0px;top:309px" width="16.5" height="17" viewBox="0 0 16.5 17"><path d="M4,3 H9.5 L12.5,6 V14 H4 Z" fill="none" stroke="#e0e0e0" stroke-width="1.1"/><text x="8.3" y="12.5" text-anchor="middle" font-size="6.5" fill="#e0e0e0" font-family="Liberation Sans">1</text></svg>
<svg style="left:902.0px;top:309px" width="22.0" height="17" viewBox="0 0 22.0 17"><path d="M3,3 H8 L10.5,5.5 V10 M3,3 V14 H6" fill="none" stroke="#e0e0e0" stroke-width="1.1"/><path d="M9,9.5 V15.5 M6,12.5 H12" stroke="#e0e0e0" stroke-width="1.4"/><path d="M15,9 H20 L17.5,12 Z" fill="#e0e0e0"/></svg>
<svg style="left:927.0px;top:309px" width="17.0" height="17" viewBox="0 0 17.0 17"><path d="M3,5 H7.5 L9,6.5 H14.5 V13.5 H3 Z" fill="#e0e0e0"/></svg>
<svg style="left:953.0px;top:309px" width="16.5" height="17" viewBox="0 0 16.5 17"><rect x="3.5" y="3.5" width="8" height="8" fill="none" stroke="#e0e0e0" stroke-width="1.1"/><rect x="6" y="6" width="8" height="8" fill="#474747" stroke="#e0e0e0" stroke-width="1.1"/></svg>
<svg style="left:973.0px;top:309px" width="17.0" height="17" viewBox="0 0 17.0 17"><rect x="3" y="3" width="5" height="4" fill="#e0e0e0"/><rect x="3" y="10" width="5" height="4" fill="#e0e0e0"/><rect x="11" y="6.5" width="4" height="4" fill="#e0e0e0"/><path d="M5.5,7 V10 M8,8.5 H11" stroke="#e0e0e0" stroke-width="1"/></svg>
<svg style="left:998.0px;top:309px" width="18.0" height="17" viewBox="0 0 18.0 17"><path d="M3.5,4.5 H14.5 M7,4.5 V3 H11 V4.5" stroke="#e0e0e0" stroke-width="1.2" fill="none"/><path d="M4.5,5.5 H13.5 V14.5 H4.5 Z" fill="#e0e0e0"/><path d="M7,7 V13 M9,7 V13 M11,7 V13" stroke="#474747" stroke-width="0.9"/></svg>
<div class="ph" style="left:836px;top:334px;width:188px"></div>
<div class="t" style="left:900.5px;top:336.5px;font-size:9.6px;color:#cdcdcd;letter-spacing:0;transform:scaleX(0.8040);transform-origin:0 0;">Brush Size</div>
<svg style="left:1001.0px;top:338.5px" width="8.5" height="8.5" viewBox="0 0 8.5 8.5"><path d="M4.5,1.2 H1.2 V7.3 H7.3 V4" stroke="#cfcfcf" stroke-width="1.2" fill="none"/><path d="M3.5,5 L7.2,1.3" stroke="#cfcfcf" stroke-width="1.1"/><rect x="5.5" y="0" width="2.5" height="2.5" fill="#cfcfcf"/></svg>
<svg style="left:1013.6px;top:338.7px" width="7" height="7" viewBox="0 0 7 7"><path d="M0.8,0.8 L6.2,6.2 M6.2,0.8 L0.8,6.2" stroke="#dedede" stroke-width="1.8"/></svg>
<div class="a" style="left:837px;top:350px;width:171px;height:164px;background:#4a4a4a"></div>
<div class="a" style="left:837.0px;top:350.0px;width:29px;height:36.5px;background:#585858;overflow:hidden"><div class="a" style="left:14.0px;top:14.5px;width:1.0px;height:1.0px;border-radius:50%;background:#f0f0f0;opacity:0.35"></div><div class="t" style="left:0;top:26.5px;width:29px;text-align:center;font-size:8.8px;color:#f0f0f0;letter-spacing:-0.2px">1</div></div><div class="a" style="left:866.8px;top:350.0px;width:29px;height:36.5px;background:#585858;overflow:hidden"><div class="a" style="left:13.7px;top:14.2px;width:1.6px;height:1.6px;border-radius:50%;background:#f0f0f0;opacity:0.35"></div><div class="t" style="left:0;top:26.5px;width:29px;text-align:center;font-size:8.8px;color:#f0f0f0;letter-spacing:-0.2px">1.5</div></div><div class="a" style="left:896.6px;top:350.0px;width:29px;height:36.5px;background:#585858;overflow:hidden"><div class="a" style="left:13.5px;top:14.0px;width:2.0px;height:2.0px;border-radius:50%;background:#f0f0f0;opacity:1.00"></div><div class="t" style="left:0;top:26.5px;width:29px;text-align:center;font-size:8.8px;color:#f0f0f0;letter-spacing:-0.2px">2</div></div><div class="a" style="left:926.4px;top:350.0px;width:29px;height:36.5px;background:#585858;overflow:hidden"><div class="a" style="left:13.0px;top:13.5px;width:3.0px;height:3.0px;border-radius:50%;background:#f0f0f0;opacity:1.00"></div><div class="t" style="left:0;top:26.5px;width:29px;text-align:center;font-size:8.8px;color:#f0f0f0;letter-spacing:-0.2px">3</div></div><div class="a" style="left:956.2px;top:350.0px;width:29px;height:36.5px;background:#585858;overflow:hidden"><div class="a" style="left:12.4px;top:12.9px;width:4.2px;height:4.2px;border-radius:50%;background:#f0f0f0;opacity:1.00"></div><div class="t" style="left:0;top:26.5px;width:29px;text-align:center;font-size:8.8px;color:#f0f0f0;letter-spacing:-0.2px">4</div></div><div class="a" style="left:837.0px;top:388.0px;width:29px;height:36.5px;background:#585858;overflow:hidden"><div class="a" style="left:12.2px;top:12.7px;width:4.6px;height:4.6px;border-radius:50%;background:#f0f0f0;opacity:1.00"></div><div class="t" style="left:0;top:26.5px;width:29px;text-align:center;font-size:8.8px;color:#f0f0f0;letter-spacing:-0.2px">5</div></div><div class="a" style="left:866.8px;top:388.0px;width:29px;height:36.5px;background:#585858;overflow:hidden"><div class="a" style="left:11.5px;top:12.0px;width:6.0px;height:6.0px;border-radius:50%;background:#f0f0f0;opacity:1.00"></div><div class="t" style="left:0;top:26.5px;width:29px;text-align:center;font-size:8.8px;color:#f0f0f0;letter-spacing:-0.2px">7</div></div><div class="a" style="left:896.6px;top:388.0px;width:29px;height:36.5px;background:#585858;overflow:hidden"><div class="a" style="left:10.6px;top:11.1px;width:7.8px;height:7.8px;border-radius:50%;background:#f0f0f0;opacity:1.00"></div><div class="t" style="left:0;top:26.5px;width:29px;text-align:center;font-size:8.8px;color:#f0f0f0;letter-spacing:-0.2px">10</div></div><div class="a" style="left:926.4px;top:388.0px;width:29px;height:36.5px;background:#585858;overflow:hidden"><div class="a" style="left:9.6px;top:10.1px;width:9.8px;height:9.8px;border-radius:50%;background:#f0f0f0;opacity:1.00"></div><div class="t" style="left:0;top:26.5px;width:29px;text-align:center;font-size:8.8px;color:#f0f0f0;letter-spacing:-0.2px">12</div></div><div class="a" style="left:956.2px;top:388.0px;width:29px;height:36.5px;background:#585858;overflow:hidden"><div class="a" style="left:8.3px;top:8.8px;width:12.4px;height:12.4px;border-radius:50%;background:#f0f0f0;opacity:1.00"></div><div class="t" style="left:0;top:26.5px;width:29px;text-align:center;font-size:8.8px;color:#f0f0f0;letter-spacing:-0.2px">15</div></div><div class="a" style="left:837.0px;top:425.5px;width:29px;height:36.5px;background:#585858;overflow:hidden"><div class="a" style="left:7.2px;top:7.7px;width:14.6px;height:14.6px;border-radius:50%;background:#f0f0f0;opacity:1.00"></div><div class="t" style="left:0;top:26.5px;width:29px;text-align:center;font-size:8.8px;color:#f0f0f0;letter-spacing:-0.2px">20</div></div><div class="a" style="left:866.8px;top:425.5px;width:29px;height:36.5px;background:#585858;overflow:hidden"><div class="a" style="left:5.8px;top:6.3px;width:17.4px;height:17.4px;border-radius:50%;background:#f0f0f0;opacity:1.00"></div><div class="t" style="left:0;top:26.5px;width:29px;text-align:center;font-size:8.8px;color:#f0f0f0;letter-spacing:-0.2px">25</div></div><div class="a" style="left:896.6px;top:425.5px;width:29px;height:36.5px;background:#585858;overflow:hidden"><div class="a" style="left:5.8px;top:6.3px;width:17.4px;height:17.4px;border-radius:50%;background:#f0f0f0;opacity:1.00"></div><div class="t" style="left:0;top:26.5px;width:29px;text-align:center;font-size:8.8px;color:#f0f0f0;letter-spacing:-0.2px">30</div></div><div class="a" style="left:926.4px;top:425.5px;width:29px;height:36.5px;background:#585858;overflow:hidden"><div class="a" style="left:5.8px;top:6.3px;width:17.4px;height:17.4px;border-radius:50%;background:#f0f0f0;opacity:1.00"></div><div class="t" style="left:0;top:26.5px;width:29px;text-align:center;font-size:8.8px;color:#f0f0f0;letter-spacing:-0.2px">40</div></div><div class="a" style="left:956.2px;top:425.5px;width:29px;height:36.5px;background:#585858;overflow:hidden"><div class="a" style="left:5.8px;top:6.3px;width:17.4px;height:17.4px;border-radius:50%;background:#f0f0f0;opacity:1.00"></div><div class="t" style="left:0;top:26.5px;width:29px;text-align:center;font-size:8.8px;color:#f0f0f0;letter-spacing:-0.2px">50</div></div><div class="a" style="left:837.0px;top:463.0px;width:29px;height:36.5px;background:#585858;overflow:hidden"><div class="a" style="left:5.8px;top:6.3px;width:17.4px;height:17.4px;border-radius:50%;background:#f0f0f0;opacity:1.00"></div><div class="t" style="left:0;top:26.5px;width:29px;text-align:center;font-size:8.8px;color:#f0f0f0;letter-spacing:-0.2px">70</div></div><div class="a" style="left:866.8px;top:463.0px;width:29px;height:36.5px;background:#585858;overflow:hidden"><div class="a" style="left:5.8px;top:6.3px;width:17.4px;height:17.4px;border-radius:50%;background:#f0f0f0;opacity:1.00"></div><div class="t" style="left:0;top:26.5px;width:29px;text-align:center;font-size:8.8px;color:#f0f0f0;letter-spacing:-0.2px">100</div></div><div class="a" style="left:896.6px;top:463.0px;width:29px;height:36.5px;background:#585858;overflow:hidden"><div class="a" style="left:5.8px;top:6.3px;width:17.4px;height:17.4px;border-radius:50%;background:#f0f0f0;opacity:1.00"></div><div class="t" style="left:0;top:26.5px;width:29px;text-align:center;font-size:8.8px;color:#f0f0f0;letter-spacing:-0.2px">150</div></div><div class="a" style="left:926.4px;top:463.0px;width:29px;height:36.5px;background:#585858;overflow:hidden"><div class="a" style="left:5.8px;top:6.3px;width:17.4px;height:17.4px;border-radius:50%;background:#f0f0f0;opacity:1.00"></div><div class="t" style="left:0;top:26.5px;width:29px;text-align:center;font-size:8.8px;color:#f0f0f0;letter-spacing:-0.2px">200</div></div><div class="a" style="left:956.2px;top:463.0px;width:29px;height:36.5px;background:#585858;overflow:hidden"><div class="a" style="left:5.8px;top:6.3px;width:17.4px;height:17.4px;border-radius:50%;background:#f0f0f0;opacity:1.00"></div><div class="t" style="left:0;top:26.5px;width:29px;text-align:center;font-size:8.8px;color:#f0f0f0;letter-spacing:-0.2px">300</div></div><div class="a" style="left:837.0px;top:500.0px;width:29px;height:14.0px;background:#585858;overflow:hidden"><div class="a" style="left:5.8px;top:6.3px;width:17.4px;height:17.4px;border-radius:50%;background:#f0f0f0;opacity:1.00"></div></div><div class="a" style="left:866.8px;top:500.0px;width:29px;height:14.0px;background:#585858;overflow:hidden"><div class="a" style="left:5.8px;top:6.3px;width:17.4px;height:17.4px;border-radius:50%;background:#f0f0f0;opacity:1.00"></div></div><div class="a" style="left:896.6px;top:500.0px;width:29px;height:14.0px;background:#585858;overflow:hidden"><div class="a" style="left:5.8px;top:6.3px;width:17.4px;height:17.4px;border-radius:50%;background:#f0f0f0;opacity:1.00"></div></div><div class="a" style="left:926.4px;top:500.0px;width:29px;height:14.0px;background:#585858;overflow:hidden"><div class="a" style="left:5.8px;top:6.3px;width:17.4px;height:17.4px;border-radius:50%;background:#f0f0f0;opacity:1.00"></div></div>
<div class="a" style="left:1008px;top:350px;width:13px;height:164px;background:#2a2a2a"></div>
<svg style="left:1010.5px;top:352px" width="9" height="7" viewBox="0 0 9 7"><path d="M4.5,0.5 L8.5,6.5 H0.5 Z" fill="#bbb"/></svg>
<div class="a" style="left:1009.5px;top:362px;width:11px;height:123px;background:linear-gradient(to right,#6a6a6a,#767676);border-radius:4px"></div>
<svg style="left:1010.5px;top:506px" width="9" height="7" viewBox="0 0 9 7"><path d="M4.5,6.5 L8.5,0.5 H0.5 Z" fill="#bbb"/></svg>
<div class="a" style="left:836px;top:514px;width:188px;height:16px;background:#262626"></div>
<div class="a" style="left:837px;top:514px;width:94px;height:15.5px;background:#2a2a2a"></div>
<div class="t" style="left:839.8px;top:516.5px;font-size:9.4px;color:#d8d8d8;letter-spacing:0;transform:scaleX(0.8664);transform-origin:0 0;">Cọ: Bút chì (Đánh bóng)</div>
<div class="a" style="left:931px;top:514px;width:45px;height:16px;background:#3a3a3a"></div>
<div class="t" style="left:935.7px;top:517.0px;font-size:9.4px;color:#d0d0d0;letter-spacing:0;transform:scaleX(0.8204);transform-origin:0 0;">Brush Size</div>
<div class="a" style="left:0;top:530.5px;width:1024px;height:14.5px;background:#232323"></div>
<div class="t" style="left:4.6px;top:532.5px;font-size:9.6px;color:#d8d8d8;letter-spacing:0;transform:scaleX(0.8684);transform-origin:0 0;">3000 * 2000 pixel</div>
<div class="t" style="left:76.0px;top:532.5px;font-size:9.6px;color:#d8d8d8;letter-spacing:0;transform:scaleX(0.8842);transform-origin:0 0;">(21.8 * 14.5cm)</div>
<div class="t" style="left:141.6px;top:532.5px;font-size:9.6px;color:#d8d8d8;letter-spacing:0;transform:scaleX(0.8862);transform-origin:0 0;">350 dpi</div>
<div class="t" style="left:176.0px;top:532.5px;font-size:9.6px;color:#d8d8d8;letter-spacing:0;transform:scaleX(0.9143);transform-origin:0 0;">25 %</div>
<div class="t" style="left:203.0px;top:532.5px;font-size:9.6px;color:#d8d8d8;letter-spacing:0;transform:scaleX(0.8455);transform-origin:0 0;">( 3234, 127 )</div>
<div class="t" style="left:255.7px;top:532.5px;font-size:9.6px;color:#d8d8d8;letter-spacing:0;transform:scaleX(0.9431);transform-origin:0 0;">Di chuyển ngang/vuông góc bằng cách giữ phím Shift</div>
</body></html>
